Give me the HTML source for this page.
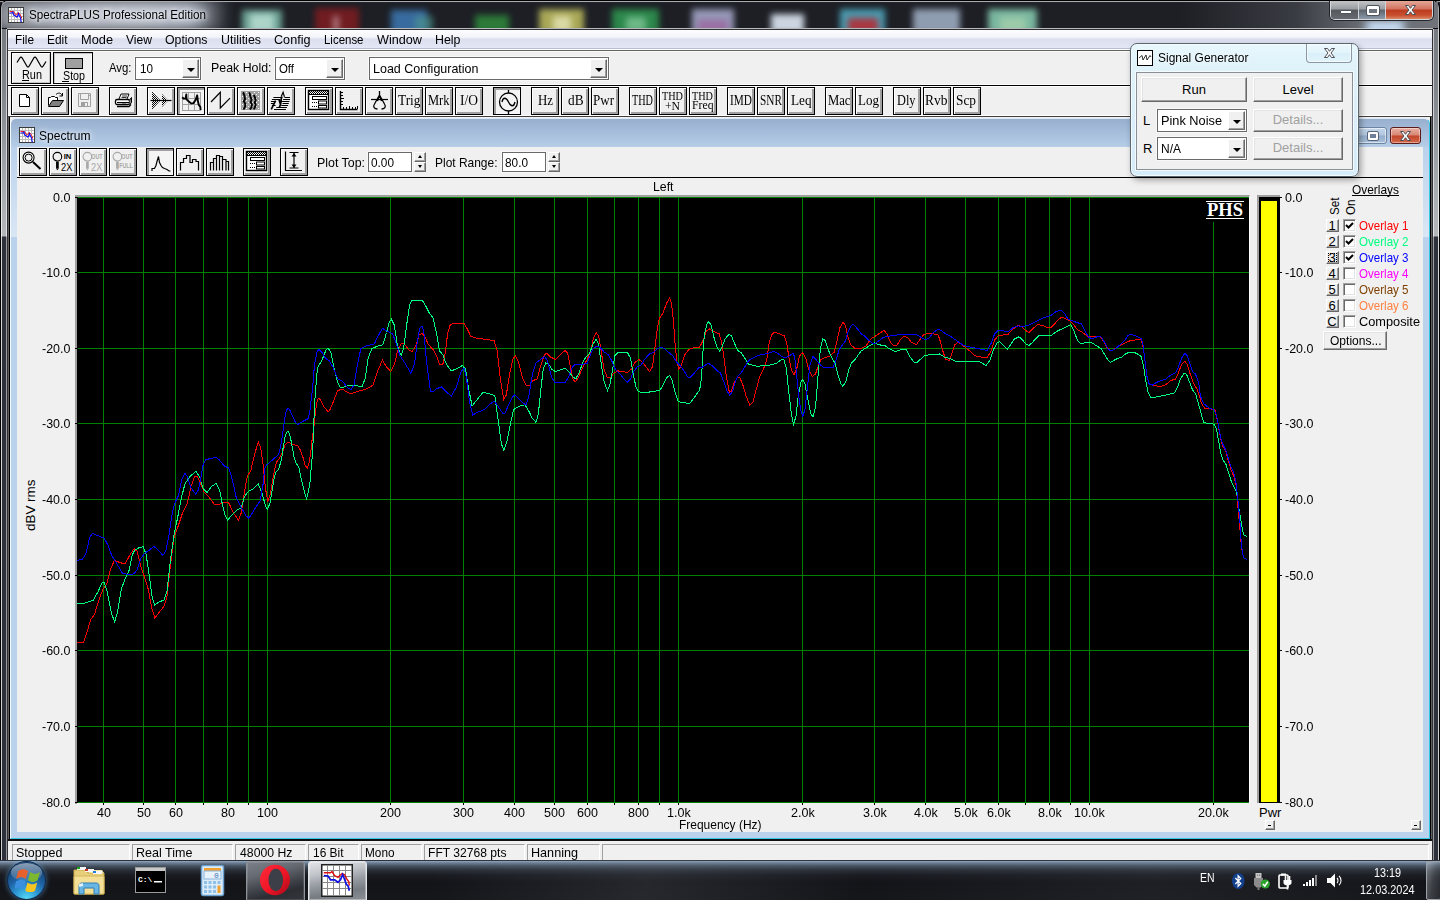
<!DOCTYPE html><html><head><meta charset="utf-8"><title>SpectraPLUS Professional Edition</title><style>
*{box-sizing:border-box}
html,body{margin:0;padding:0}
body{width:1440px;height:900px;position:relative;overflow:hidden;background:#1b1d23;font-family:"Liberation Sans",sans-serif;font-size:12px;color:#000}
.a{position:absolute}
.t{position:absolute;white-space:nowrap;line-height:1}
.btn{position:absolute;background:#f0f0f0;border:1px solid #000;box-shadow:inset 1px 1px 0 #fff,inset -1px -1px 0 #a0a0a0,inset -2px -2px 0 #a0a0a0}
.btn.dn{box-shadow:inset 2px 2px 0 #a0a0a0,inset -1px -1px 0 #f8f8f8;background:#f4f4f4}
.ser{font-family:"Liberation Serif",serif}
.sel{position:absolute;background:#fff;border:1px solid #6a6a6a;box-shadow:0 0 0 1px #f8f8f8}
.arr{position:absolute;background:#f0f0f0;border:1px solid #fff;border-right-color:#696969;border-bottom-color:#696969;box-shadow:inset -1px -1px 0 #a0a0a0}
.arr:after{content:"";position:absolute;left:50%;top:50%;margin:-1px 0 0 -4px;border:4px solid transparent;border-top:4px solid #000;border-bottom:0}
.pb{position:absolute;background:#f0f0f0;border:1px solid #fff;border-right-color:#696969;border-bottom-color:#696969;box-shadow:inset -1px -1px 0 #a0a0a0,inset 1px 1px 0 #e3e3e3;text-align:center;font-size:13px}
</style></head><body><div class="a" id="glass" style="left:0;top:0;width:1440px;height:862px;background:#1d1f25"></div><div class="a" style="left:0;top:2px;width:1440px;height:26px;overflow:hidden"><div class="a" style="left:242px;top:8px;width:40px;height:24px;background:#7fbfae;filter:blur(3px);opacity:0.80"></div><div class="a" style="left:250px;top:12px;width:24px;height:18px;background:#c8ece0;filter:blur(3px);opacity:0.70"></div><div class="a" style="left:315px;top:6px;width:44px;height:26px;background:#7a1c20;filter:blur(3px);opacity:0.90"></div><div class="a" style="left:333px;top:14px;width:6px;height:16px;background:#c8a0a8;filter:blur(3px);opacity:0.70"></div><div class="a" style="left:391px;top:8px;width:36px;height:24px;background:#3f7fbe;filter:blur(3px);opacity:0.80"></div><div class="a" style="left:415px;top:14px;width:18px;height:16px;background:#4f9a8e;filter:blur(3px);opacity:0.60"></div><div class="a" style="left:475px;top:13px;width:34px;height:18px;background:#2f8a3c;filter:blur(3px);opacity:0.85"></div><div class="a" style="left:539px;top:7px;width:45px;height:24px;background:#c2c060;filter:blur(3px);opacity:0.85"></div><div class="a" style="left:553px;top:14px;width:18px;height:16px;background:#e6e6b8;filter:blur(3px);opacity:0.80"></div><div class="a" style="left:612px;top:7px;width:47px;height:24px;background:#2f9a52;filter:blur(3px);opacity:0.85"></div><div class="a" style="left:626px;top:15px;width:20px;height:14px;background:#9adcb0;filter:blur(3px);opacity:0.60"></div><div class="a" style="left:692px;top:7px;width:42px;height:24px;background:#b4b6dc;filter:blur(3px);opacity:0.80"></div><div class="a" style="left:698px;top:18px;width:30px;height:12px;background:#a04890;filter:blur(3px);opacity:0.50"></div><div class="a" style="left:771px;top:12px;width:33px;height:19px;background:#dfe9f4;filter:blur(3px);opacity:0.90"></div><div class="a" style="left:840px;top:7px;width:45px;height:24px;background:#52b0c8;filter:blur(3px);opacity:0.85"></div><div class="a" style="left:848px;top:16px;width:30px;height:15px;background:#c02028;filter:blur(3px);opacity:0.80"></div><div class="a" style="left:913px;top:7px;width:47px;height:24px;background:#a4b4ca;filter:blur(3px);opacity:0.85"></div><div class="a" style="left:988px;top:7px;width:49px;height:24px;background:#8ad2b6;filter:blur(3px);opacity:0.85"></div><div class="a" style="left:1000px;top:15px;width:26px;height:16px;background:#b4d8b0;filter:blur(3px);opacity:0.60"></div></div><div class="a" style="left:0;top:0;width:1440px;height:3px;background:linear-gradient(#000 0,#000 1px,#9a9da2 1px,#9a9da2 2px,#23252c 2px)"></div><div class="a" style="left:0;top:28px;width:1440px;height:1px;background:#0c0d10"></div><div class="a" style="left:0;top:0;width:1440px;height:862px;border:1px solid #000;border-bottom:0;border-radius:8px 8px 0 0"></div><div class="a" style="left:1px;top:1px;width:1438px;height:861px;border:1px solid #a8abb0;border-bottom:0;border-radius:7px 7px 0 0"></div><div class="a" style="left:2px;top:29px;width:4px;height:833px;background:linear-gradient(#777b81 0,#80848a 60px,#a4a7ac 150px,#b4b6ba 207px,#2f313a 208px,#2f313a 100%)"></div><div class="a" style="left:1px;top:29px;width:1px;height:833px;background:linear-gradient(#d0d2d4 0,#ececee 207px,#d8d8dc 208px,#d0d0d4 100%)"></div><div class="a" style="left:6px;top:29px;width:1px;height:833px;background:linear-gradient(#c4c6c8 0,#e4e4e6 207px,#a0a0a4 208px,#98989c 100%)"></div><div class="a" style="left:1434px;top:29px;width:4px;height:833px;background:linear-gradient(#777b81 0,#80848a 60px,#a4a7ac 150px,#b4b6ba 207px,#2f313a 208px,#2f313a 100%)"></div><div class="a" style="left:1433px;top:29px;width:1px;height:833px;background:linear-gradient(#c4c6c8 0,#e4e4e6 207px,#a0a0a4 208px,#98989c 100%)"></div><div class="a" style="left:1438px;top:29px;width:1px;height:833px;background:linear-gradient(#d0d2d4 0,#ececee 207px,#d8d8dc 208px,#d0d0d4 100%)"></div><div class="a" style="left:7px;top:28px;width:1426px;height:1px;background:#b8babd"></div><div class="a" style="left:7px;top:29px;width:1426px;height:833px;background:#f0f0f0;border:1px solid #2e3035"></div><div class="a" style="left:1180px;top:2px;width:258px;height:26px;background:linear-gradient(90deg,rgba(110,114,120,0) 0,rgba(110,114,120,.35) 45%,rgba(112,116,122,.9) 70%,rgba(112,116,122,1) 100%)"></div><div class="a" style="left:1356px;top:19px;width:60px;height:10px;overflow:hidden"><div class="a" style="left:10px;top:2px;width:38px;height:12px;background:#cfe6ff;filter:blur(4px)"></div></div><div class="a" style="left:1329px;top:1px;width:105px;height:20px;border:1px solid #23252a;border-top:0;border-radius:0 0 6px 6px"></div><div class="a" style="left:1330px;top:1px;width:103px;height:19px;border:1px solid #d4d8dc;border-top:0;border-radius:0 0 5px 5px;overflow:hidden"><div class="a" style="left:0;top:0;width:28px;height:18px;background:linear-gradient(#c2c4c6,#9a9da1 45%,#55585d 50%,#66696f);border-right:1px solid #d0d4d8"></div><div class="a" style="left:28px;top:0;width:27px;height:18px;background:linear-gradient(#c2c4c6,#9a9da1 45%,#5c636c 50%,#8b9aab);border-right:1px solid #d0d4d8"></div><div class="a" style="left:55px;top:0;width:47px;height:18px;background:linear-gradient(#e3a898,#d3725e 45%,#bd3a20 50%,#c8502f 80%,#dc8a68)"></div><div class="a" style="left:9px;top:9px;width:12px;height:4px;background:#fff;border:1px solid #50545c;border-radius:1px"></div><div class="a" style="left:36px;top:5px;width:12px;height:9px;border:2px solid #fff;border-top-width:3px;outline:1px solid #50545c;border-radius:1px;background:#6f757e"></div><svg class="a" style="left:73px;top:3px" width="13" height="12" viewBox="0 0 13 12" shape-rendering="auto"><path d="M1.500 1.500h3l2 2.800 2-2.800h3l-3.500 4.500 3.500 4.500h-3l-2-2.800-2 2.800h-3l3.500-4.500z" fill="#fff" stroke="#4a4e58" stroke-width="1"/></svg></div><div class="a" style="left:2px;top:2px;width:260px;height:26px;overflow:hidden"><div class="a" style="left:-8px;top:-3px;width:236px;height:32px;background:linear-gradient(90deg,#8e9298,#b8bcc6 27%,#c4c8d2 62%,#b4bac6 84%,rgba(150,156,168,0) 100%);filter:blur(6px);opacity:.95;border-radius:8px"></div></div><svg class="a" style="left:8px;top:7px" width="16" height="16" viewBox="0 0 16 16"><rect x="0" y="0" width="16" height="16" fill="#fff"/><path d="M3.500 1v14M6.500 1v14M9.500 1v14M12.500 1v14M1 3.500h14M1 6.500h14M1 9.500h14M1 12.500h14" stroke="#bcbcbc" stroke-width="1"/><rect x=".5" y=".5" width="15" height="15" fill="none" stroke="#3a3a3a"/><path d="M1.500 4.500h3.500l1 .5 1 2 1.500 1 1.500-2.500 1 .5 1 1.500 1.500 2.500v1.500" stroke="#f02020" stroke-width="1" fill="none" shape-rendering="auto"/><path d="M1.500 6h3l.5-1.500.5 3.500 1.500.5 1.500 1.500 1-.5 1-3 1 2.500 1 2 .5 3 .5 1" stroke="#1010f0" stroke-width="1.100" fill="none" shape-rendering="auto"/></svg><div class="t" style="left:28.5px;top:8.8px;font-size:12px;font-family:'Liberation Sans',sans-serif;color:#000;font-weight:normal;transform-origin:0 0;transform:scaleX(0.9719);text-shadow:0 0 4px #fff,0 0 7px #e8ecf8,0 0 10px #d8e0f0;">SpectraPLUS Professional Edition</div><div class="a" style="left:8px;top:30px;width:1424px;height:19px;background:linear-gradient(#fdfdfe 0,#f4f5fa 40%,#dcdfee 50%,#e0e4f3 85%,#e3e8f8 100%);border-bottom:1px solid #b8bfd2"></div><div class="a" style="left:8px;top:49px;width:1424px;height:3px;background:linear-gradient(#fff 0,#fff 1px,#646464 1px,#646464 2px,#fafafa 2px)"></div><div class="t" style="left:14.5px;top:34.4px;font-size:12.5px;font-family:'Liberation Sans',sans-serif;color:#000;font-weight:normal;transform-origin:0 0;transform:scaleX(0.9426);">File</div><div class="t" style="left:47.0px;top:34.4px;font-size:12.5px;font-family:'Liberation Sans',sans-serif;color:#000;font-weight:normal;transform-origin:0 0;transform:scaleX(0.9514);">Edit</div><div class="t" style="left:80.5px;top:34.4px;font-size:12.5px;font-family:'Liberation Sans',sans-serif;color:#000;font-weight:normal;transform-origin:0 0;transform:scaleX(1.0230);">Mode</div><div class="t" style="left:125.5px;top:34.4px;font-size:12.5px;font-family:'Liberation Sans',sans-serif;color:#000;font-weight:normal;transform-origin:0 0;transform:scaleX(0.9674);">View</div><div class="t" style="left:165.0px;top:34.4px;font-size:12.5px;font-family:'Liberation Sans',sans-serif;color:#000;font-weight:normal;transform-origin:0 0;transform:scaleX(0.9862);">Options</div><div class="t" style="left:220.5px;top:34.4px;font-size:12.5px;font-family:'Liberation Sans',sans-serif;color:#000;font-weight:normal;transform-origin:0 0;transform:scaleX(0.9926);">Utilities</div><div class="t" style="left:273.5px;top:34.4px;font-size:12.5px;font-family:'Liberation Sans',sans-serif;color:#000;font-weight:normal;transform-origin:0 0;transform:scaleX(1.0099);">Config</div><div class="t" style="left:324.0px;top:34.4px;font-size:12.5px;font-family:'Liberation Sans',sans-serif;color:#000;font-weight:normal;transform-origin:0 0;transform:scaleX(0.9166);">License</div><div class="t" style="left:376.5px;top:34.4px;font-size:12.5px;font-family:'Liberation Sans',sans-serif;color:#000;font-weight:normal;transform-origin:0 0;transform:scaleX(1.0119);">Window</div><div class="t" style="left:434.5px;top:34.4px;font-size:12.5px;font-family:'Liberation Sans',sans-serif;color:#000;font-weight:normal;transform-origin:0 0;transform:scaleX(0.9915);">Help</div><div class="a" style="left:8px;top:52px;width:1424px;height:34px;background:#f0f0f0;border-bottom:1px solid #000;box-shadow:inset 0 -1px 0 #fff"></div><div class="a" style="left:8px;top:86px;width:1424px;height:30px;background:#f0f0f0;border-top:1px solid #fff;border-bottom:1px solid #fff"></div><div class="a" style="left:8px;top:116px;width:1424px;height:2px;background:linear-gradient(#404040 50%,#2a2a2a 50%)"></div><div class="btn" style="left:11px;top:52px;width:40px;height:32px;box-shadow:inset 1px 1px 0 #fff,inset -1px -1px 0 #c8c8c8"></div><svg class="a" style="left:16px;top:55px" width="32" height="14" viewBox="0 0 32 14"><path d="M1 7.500L3.800 3Q5 1 6.200 3L10.800 11Q12 13 13.200 11L17.800 3Q19 1 20.200 3L24.800 11Q26 13 27.200 11L30 6.500" fill="none" stroke="#000" stroke-width="1.250" shape-rendering="auto"/></svg><div class="t" style="left:21.5px;top:68.8px;font-size:12px;font-family:'Liberation Sans',sans-serif;color:#000;font-weight:normal;transform-origin:0 0;transform:scaleX(0.9084);">Run</div><div class="a" style="left:22px;top:80px;width:7px;height:1px;background:#000"></div><div class="btn" style="left:53px;top:52px;width:40px;height:32px;box-shadow:inset 1px 1px 0 #c4c4c4,inset -1px -1px 0 #fff;background:#f2f2f2"></div><div class="a" style="left:65px;top:58px;width:18px;height:11px;background:#a0a0a0;border:1px solid #000"></div><div class="t" style="left:62.5px;top:69.8px;font-size:12px;font-family:'Liberation Sans',sans-serif;color:#000;font-weight:normal;transform-origin:0 0;transform:scaleX(0.8911);">Stop</div><div class="a" style="left:62px;top:81px;width:7px;height:1px;background:#000"></div><div class="t" style="left:108.5px;top:61.0px;font-size:13px;font-family:'Liberation Sans',sans-serif;color:#000;font-weight:normal;transform-origin:0 0;transform:scaleX(0.8727);">Avg:</div><div class="sel" style="left:135px;top:57px;width:66px;height:23px"></div><div class="t" style="left:139.5px;top:62.0px;font-size:13px;font-family:'Liberation Sans',sans-serif;color:#000;font-weight:normal;transform-origin:0 0;transform:scaleX(0.8985);">10</div><div class="arr" style="left:182px;top:59px;width:17px;height:19px"></div><div class="t" style="left:210.5px;top:61.0px;font-size:13px;font-family:'Liberation Sans',sans-serif;color:#000;font-weight:normal;transform-origin:0 0;transform:scaleX(0.9514);">Peak Hold:</div><div class="sel" style="left:275px;top:57px;width:70px;height:23px"></div><div class="t" style="left:279.0px;top:62.0px;font-size:13px;font-family:'Liberation Sans',sans-serif;color:#000;font-weight:normal;transform-origin:0 0;transform:scaleX(0.8767);">Off</div><div class="arr" style="left:326px;top:59px;width:17px;height:19px"></div><div class="sel" style="left:369px;top:57px;width:240px;height:23px"></div><div class="t" style="left:372.5px;top:62.0px;font-size:13px;font-family:'Liberation Sans',sans-serif;color:#000;font-weight:normal;transform-origin:0 0;transform:scaleX(0.9603);">Load Configuration</div><div class="arr" style="left:590px;top:59px;width:17px;height:19px"></div><div class="btn" style="left:11px;top:87px;width:28px;height:28px"></div><svg class="a" style="left:11px;top:87px" width="28" height="28" viewBox="0 0 28 28" ><path d="M8.5 7.5h7l3 3v9h-10z" fill="#fff" stroke="#000"/><path d="M15.5 7.5v3h3" fill="none" stroke="#000"/></svg><div class="btn" style="left:41px;top:87px;width:28px;height:28px"></div><svg class="a" style="left:41px;top:87px" width="28" height="28" viewBox="0 0 28 28" ><path d="M7.5 18.5v-8h2l1-1h3l1 1h2v3" fill="#fff" stroke="#000"/><path d="M7.5 19.5l4-6h11l-4 6z" fill="#808080" stroke="#000"/><path d="M15 7.5c2-2 5-2 6 1M21.5 6v3h-3" fill="none" stroke="#000"/></svg><div class="btn" style="left:71px;top:87px;width:28px;height:28px"></div><svg class="a" style="left:71px;top:87px" width="28" height="28" viewBox="0 0 28 28" ><path d="M7.500 6.500h12v13h-12z" fill="#f0f0f0" stroke="#a0a0a0"/><path d="M9.500 6.500h8v6h-8z" fill="#f0f0f0" stroke="#a0a0a0"/><rect x="10" y="15" width="7" height="5" fill="#a0a0a0"/><rect x="14" y="16" width="2" height="3" fill="#f0f0f0"/><rect x="18" y="8" width="1" height="1" fill="#a0a0a0"/></svg><div class="btn" style="left:109px;top:87px;width:28px;height:28px"></div><svg class="a" style="left:109px;top:87px" width="28" height="28" viewBox="0 0 28 28" ><path d="M10 12l2-5h8l-2 5" fill="#fff" stroke="#000"/><path d="M13 9h5M12.500 10.500h5" stroke="#000" stroke-width=".8"/><rect x="6.500" y="12.500" width="14" height="5" rx="1.500" fill="#fff" stroke="#000" stroke-width="1.300"/><path d="M20.500 13l2-2.500v5l-2 2.500" fill="#808080" stroke="#000"/><path d="M8 19.500h12l2-2" fill="none" stroke="#000" stroke-width="1.300"/><path d="M8 15.500h12" stroke="#000"/><rect x="13" y="16" width="4" height="1" fill="#808080"/></svg><div class="btn" style="left:147px;top:87px;width:28px;height:28px"></div><svg class="a" style="left:147px;top:87px" width="28" height="28" viewBox="0 0 28 28" ><defs><pattern id="chk" width="2" height="2" patternUnits="userSpaceOnUse"><rect width="1" height="1" fill="#000"/><rect x="1" y="1" width="1" height="1" fill="#000"/></pattern></defs><path d="M5 4.500l8.500 9-8.500 9z" fill="url(#chk)"/><path d="M15 7l6 6.500-6 6.500z" fill="url(#chk)"/><path d="M3.500 13.500h21" stroke="#000" stroke-width="1.200"/></svg><div class="btn dn" style="left:177px;top:87px;width:28px;height:28px"></div><svg class="a" style="left:178px;top:88px" width="28" height="28" viewBox="0 0 28 28" ><rect x="4.500" y="4.500" width="18" height="18" fill="#f0f0f0" stroke="#a0a0a0"/><path d="M10.500 5v18M16.500 5v18M5 10.500h18M5 16.500h18" stroke="#a0a0a0" stroke-width="1"/><path d="M4.200 9.200l1.600 1.500 1.800-.3.700-4 .2 5 2.300 2.100 2.500 1.900 2.100-.3 2.200-3.100 1.600-4.700.6 5.300 1 4.400 1.500 1.900.3 3.100" fill="none" stroke="#000" stroke-width="1.900" stroke-linejoin="round" shape-rendering="auto"/></svg><div class="btn" style="left:207px;top:87px;width:28px;height:28px"></div><svg class="a" style="left:207px;top:87px" width="28" height="28" viewBox="0 0 28 28" ><path d="M4 15l9.300-9.700v15.700l9.700-9.800" fill="none" stroke="#000" stroke-width="1.200"/></svg><div class="btn" style="left:237px;top:87px;width:28px;height:28px"></div><svg class="a" style="left:237px;top:87px" width="28" height="28" viewBox="0 0 28 28" ><defs><pattern id="dots" width="4" height="4" patternUnits="userSpaceOnUse"><rect width="4" height="4" fill="#a0a0a0"/><rect x="1" y="1" width="1" height="1" fill="#fff"/><rect x="3" y="3" width="1" height="1" fill="#f0f0f0"/></pattern></defs><rect x="4" y="4" width="19" height="19" fill="url(#dots)"/><path d="M6.100 5.200l1.300 3.400.6 3.800-1.250 1.850 1.550 2.500-.3 3.150-1.600 2.500M12.400 5.200l.9 4.050 1.300 3.450-1 2.200 1.300 2.500-.3 2.500-1.600 2.500M16.750 8l1.250 2.500.6 2.800-.9 1.900.9 2.500-.6 2.500-1.250 2.200" fill="none" stroke="#000" stroke-width="1.900" shape-rendering="auto"/></svg><div class="btn" style="left:267px;top:87px;width:28px;height:28px"></div><svg class="a" style="left:267px;top:87px" width="28" height="28" viewBox="0 0 28 28" ><path d="M6.400 10.500h9.100M17.400 10.500h5.600M4.900 12.500h8.700M16.100 12.500h6.900M3.900 14.500h4.700M13.600 14.500h8.800M3.900 16.500h4.100M15.500 16.500h6.250M4.900 18.500h3.700M14.250 18.500h6.850M9.250 20.500h10.650M7 22.500h11.900" stroke="#000" stroke-width="1.200"/><path d="M14.250 9.500l1.850-4.300 1.300 4.700" fill="none" stroke="#000" stroke-width="1.200" shape-rendering="auto"/><path d="M8.600 13.600l-4.350 8.800M12 12.500l1.500 5-1.200 3M14.600 9.500l-1 8" fill="none" stroke="#000" stroke-width="1.700" shape-rendering="auto"/></svg><div class="btn" style="left:305px;top:87px;width:28px;height:28px"></div><svg class="a" style="left:305px;top:87px" width="28" height="28" viewBox="0 0 28 28" ><rect x="3.500" y="3.500" width="20" height="19" fill="#fff" stroke="#000" stroke-width="1.400"/><rect x="4" y="4" width="19" height="3" fill="url(#chk)"/><path d="M4 7.500h19" stroke="#000"/><rect x="7.500" y="9.500" width="14" height="3" fill="#fff" stroke="#000"/><rect x="13.500" y="14" width="8" height="3" fill="#fff" stroke="#000"/><rect x="13.500" y="18.500" width="8" height="2.500" fill="#fff" stroke="#000"/><path d="M7 15.500h5M7 19.500h5" stroke="#000" stroke-dasharray="1 1"/></svg><div class="btn" style="left:335px;top:87px;width:28px;height:28px"></div><svg class="a" style="left:335px;top:87px" width="28" height="28" viewBox="0 0 28 28" ><path d="M5.500 4v18.500h17" fill="none" stroke="#000" stroke-width="1.400"/><path d="M6 5.500h2M6 8.500h2M6 11.500h3M6 14.500h2M6 17.500h2M8.500 22v-2M11.500 22v-2M14.500 22v-3M17.500 22v-2M20.500 22v-2M22.500 22v-3" stroke="#000"/></svg><div class="btn" style="left:365px;top:87px;width:28px;height:28px"></div><svg class="a" style="left:365px;top:87px" width="28" height="28" viewBox="0 0 28 28" ><path d="M6 12.500h17" stroke="#000" stroke-width="1.200"/><path d="M14.500 4v4l-5 9c-2 3 0 5 3 5M14.500 8l5 9c2 3 0 5-3 5M14.500 8l-2 6M14.500 8l2 6" fill="none" stroke="#000" stroke-width="1.300"/></svg><div class="btn" style="left:395px;top:87px;width:28px;height:28px"></div><div class="btn" style="left:425px;top:87px;width:28px;height:28px"></div><div class="btn" style="left:455px;top:87px;width:28px;height:28px"></div><div class="btn dn" style="left:493px;top:87px;width:28px;height:28px"></div><svg class="a" style="left:494px;top:88px" width="28" height="28" viewBox="0 0 28 28" ><circle cx="14.500" cy="14" r="9" fill="none" stroke="#000" stroke-width="1.300"/><path d="M14.500 2v3M14.500 23v3" stroke="#000" stroke-width="1.300"/><path d="M8 14c1-5 4-5 6.500 0s5.500 5 6.500 0" fill="none" stroke="#000" stroke-width="1.300"/></svg><div class="btn" style="left:531px;top:87px;width:28px;height:28px"></div><div class="btn" style="left:561px;top:87px;width:28px;height:28px"></div><div class="btn" style="left:591px;top:87px;width:28px;height:28px"></div><div class="btn" style="left:629px;top:87px;width:28px;height:28px"></div><div class="btn" style="left:659px;top:87px;width:28px;height:28px"></div><div class="btn" style="left:689px;top:87px;width:28px;height:28px"></div><div class="btn" style="left:727px;top:87px;width:28px;height:28px"></div><div class="btn" style="left:757px;top:87px;width:28px;height:28px"></div><div class="btn" style="left:787px;top:87px;width:28px;height:28px"></div><div class="btn" style="left:825px;top:87px;width:28px;height:28px"></div><div class="btn" style="left:855px;top:87px;width:28px;height:28px"></div><div class="btn" style="left:893px;top:87px;width:28px;height:28px"></div><div class="btn" style="left:923px;top:87px;width:28px;height:28px"></div><div class="btn" style="left:953px;top:87px;width:28px;height:28px"></div><div class="t" style="left:397.5px;top:94.3px;font-size:14px;font-family:'Liberation Serif',serif;color:#000;font-weight:normal;transform-origin:0 0;transform:scaleX(0.9524);">Trig</div><div class="t" style="left:427.5px;top:94.3px;font-size:14px;font-family:'Liberation Serif',serif;color:#000;font-weight:normal;transform-origin:0 0;transform:scaleX(0.8912);">Mrk</div><div class="t" style="left:460.0px;top:94.3px;font-size:14px;font-family:'Liberation Serif',serif;color:#000;font-weight:normal;transform-origin:0 0;transform:scaleX(0.9640);">I/O</div><div class="t" style="left:537.5px;top:94.3px;font-size:14px;font-family:'Liberation Serif',serif;color:#000;font-weight:normal;transform-origin:0 0;transform:scaleX(0.9187);">Hz</div><div class="t" style="left:567.5px;top:94.3px;font-size:14px;font-family:'Liberation Serif',serif;color:#000;font-weight:normal;transform-origin:0 0;transform:scaleX(0.9484);">dB</div><div class="t" style="left:593.0px;top:94.3px;font-size:14px;font-family:'Liberation Serif',serif;color:#000;font-weight:normal;transform-origin:0 0;transform:scaleX(0.9307);">Pwr</div><div class="t" style="left:631.5px;top:94.3px;font-size:14px;font-family:'Liberation Serif',serif;color:#000;font-weight:normal;transform-origin:0 0;transform:scaleX(0.7296);">THD</div><div class="t" style="left:729.5px;top:94.3px;font-size:14px;font-family:'Liberation Serif',serif;color:#000;font-weight:normal;transform-origin:0 0;transform:scaleX(0.8078);">IMD</div><div class="t" style="left:759.5px;top:94.3px;font-size:14px;font-family:'Liberation Serif',serif;color:#000;font-weight:normal;transform-origin:0 0;transform:scaleX(0.8078);">SNR</div><div class="t" style="left:790.5px;top:94.3px;font-size:14px;font-family:'Liberation Serif',serif;color:#000;font-weight:normal;transform-origin:0 0;transform:scaleX(0.9419);">Leq</div><div class="t" style="left:827.5px;top:94.3px;font-size:14px;font-family:'Liberation Serif',serif;color:#000;font-weight:normal;transform-origin:0 0;transform:scaleX(0.9040);">Mac</div><div class="t" style="left:858.0px;top:94.3px;font-size:14px;font-family:'Liberation Serif',serif;color:#000;font-weight:normal;transform-origin:0 0;transform:scaleX(0.9307);">Log</div><div class="t" style="left:897.0px;top:94.3px;font-size:14px;font-family:'Liberation Serif',serif;color:#000;font-weight:normal;transform-origin:0 0;transform:scaleX(0.8810);">Dly</div><div class="t" style="left:925.0px;top:94.3px;font-size:14px;font-family:'Liberation Serif',serif;color:#000;font-weight:normal;transform-origin:0 0;transform:scaleX(0.9639);">Rvb</div><div class="t" style="left:955.5px;top:94.3px;font-size:14px;font-family:'Liberation Serif',serif;color:#000;font-weight:normal;transform-origin:0 0;transform:scaleX(0.9524);">Scp</div><div class="t" style="left:662.0px;top:89.5px;font-size:12px;font-family:'Liberation Serif',serif;color:#000;font-weight:normal;transform-origin:0 0;transform:scaleX(0.8512);">THD</div><div class="t" style="left:665.0px;top:99.5px;font-size:12px;font-family:'Liberation Serif',serif;color:#000;font-weight:normal;transform-origin:0 0;transform:scaleX(0.9717);">+N</div><div class="t" style="left:692.0px;top:89.5px;font-size:12px;font-family:'Liberation Serif',serif;color:#000;font-weight:normal;transform-origin:0 0;transform:scaleX(0.8512);">THD</div><div class="t" style="left:692.0px;top:98.5px;font-size:12px;font-family:'Liberation Serif',serif;color:#000;font-weight:normal;transform-origin:0 0;transform:scaleX(0.9773);">Freq</div><div class="a" style="left:8px;top:117px;width:1424px;height:724px;background:#f0f0f0"></div><div class="a" style="left:8px;top:117px;width:2px;height:724px;background:linear-gradient(90deg,#606060 50%,#000 50%)"></div><div class="a" style="left:1430px;top:117px;width:2px;height:724px;background:linear-gradient(90deg,#000 50%,#606060 50%)"></div><div class="a" style="left:10px;top:118px;width:1420px;height:721px;background:linear-gradient(#98b0cf 0,#b4cbe6 26px,#bbd2ec 30px,#bbd2ec 100%);border-radius:6px 6px 0 0;border:1px solid #f4f9ff;border-right:1px solid #35c8e8;border-bottom:1px solid #35c8e8;border-top:1px solid #dfe9f5"></div><div class="a" style="left:8px;top:839px;width:1424px;height:2px;background:#111"></div><div class="a" style="left:8px;top:841px;width:1424px;height:1px;background:#fff"></div><svg class="a" style="left:19px;top:127px" width="16" height="16" viewBox="0 0 16 16"><rect x="0" y="0" width="16" height="16" fill="#fff"/><path d="M3.500 1v14M6.500 1v14M9.500 1v14M12.500 1v14M1 3.500h14M1 6.500h14M1 9.500h14M1 12.500h14" stroke="#bcbcbc" stroke-width="1"/><rect x=".5" y=".5" width="15" height="15" fill="none" stroke="#3a3a3a"/><path d="M1.500 4.500h3.500l1 .5 1 2 1.500 1 1.500-2.500 1 .5 1 1.500 1.500 2.500v1.500" stroke="#f02020" stroke-width="1" fill="none" shape-rendering="auto"/><path d="M1.500 6h3l.5-1.500.5 3.500 1.500.5 1.500 1.500 1-.5 1-3 1 2.500 1 2 .5 3 .5 1" stroke="#1010f0" stroke-width="1.100" fill="none" shape-rendering="auto"/></svg><div class="t" style="left:38.5px;top:130.4px;font-size:12.5px;font-family:'Liberation Sans',sans-serif;color:#000;font-weight:normal;transform-origin:0 0;transform:scaleX(0.9626);text-shadow:0 0 5px #fff,0 0 8px #dfeaf8;">Spectrum</div><div class="a" style="left:1336px;top:127px;width:51px;height:17px;border:1px solid #6d84a2;border-radius:3px;background:linear-gradient(#c5d6ea,#b1c6de 48%,#93adca 52%,#a9c0da);box-shadow:inset 0 0 0 1px rgba(255,255,255,.55)"></div><div class="a" style="left:1368px;top:132px;width:10px;height:8px;border:2px solid #fff;outline:1px solid #59667a;background:#6d7f99;border-radius:1px"></div><div class="a" style="left:1390px;top:127px;width:31px;height:17px;border:1px solid #5c1a1a;border-radius:3px;background:linear-gradient(#e8b0a4,#d88672 48%,#c1452b 52%,#d4694a);box-shadow:inset 0 0 0 1px rgba(255,255,255,.4)"></div><svg class="a" style="left:1399px;top:130px" width="13" height="12" viewBox="0 0 13 12" shape-rendering="auto"><path d="M1.500 1.500h3l2 2.800 2-2.800h3l-3.500 4.500 3.500 4.500h-3l-2-2.800-2 2.800h-3l3.500-4.500z" fill="#fff" stroke="#4a4e58" stroke-width="1"/></svg><div class="a" style="left:11px;top:147px;width:6px;height:90px;background:linear-gradient(rgba(255,255,255,0),rgba(255,255,255,.45))"></div><div class="a" style="left:1423px;top:147px;width:6px;height:90px;background:linear-gradient(rgba(255,255,255,0),rgba(255,255,255,.45))"></div><div class="a" style="left:17px;top:147px;width:1406px;height:685px;background:#f0f0f0"></div><div class="a" style="left:17px;top:177px;width:1406px;height:1px;background:#000"></div><div class="btn" style="left:19px;top:148px;width:28px;height:28px"></div><svg class="a" style="left:19px;top:148px" width="28" height="28" viewBox="0 0 28 28" ><circle cx="9.600" cy="9.600" r="5.500" fill="none" stroke="#000" stroke-width="1.100"/><circle cx="9.600" cy="9.600" r="3.500" fill="none" stroke="#000" stroke-width="1"/><path d="M14 14l7.500 7" stroke="#000" stroke-width="2"/></svg><div class="btn" style="left:49px;top:148px;width:28px;height:28px"></div><svg class="a" style="left:49px;top:148px" width="28" height="28" viewBox="0 0 28 28" ><circle cx="8.400" cy="8.700" r="4.300" fill="none" stroke="#000" stroke-width="1.100"/><path d="M8.400 13.500v7" stroke="#000" stroke-width="2.700"/><path d="M7 20.500l1.400 1.800 1.400-1.800z" fill="#000"/><text x="14.7" y="10.600" font-family="Liberation Sans, sans-serif" font-size="6.500" font-weight="bold" fill="#000" textLength="7.7" lengthAdjust="spacingAndGlyphs">IN</text><text x="12" y="22.700" font-family="Liberation Sans, sans-serif" font-size="11.300" fill="#000" textLength="11.300" lengthAdjust="spacingAndGlyphs">2X</text></svg><div class="btn" style="left:79px;top:148px;width:28px;height:28px"></div><svg class="a" style="left:79px;top:148px" width="28" height="28" viewBox="0 0 28 28" ><circle cx="8.400" cy="8.700" r="4.300" fill="none" stroke="#a8a8a8" stroke-width="1.100"/><path d="M8.400 13.500v7" stroke="#a8a8a8" stroke-width="2.700"/><path d="M7 20.500l1.400 1.800 1.400-1.800z" fill="#a8a8a8"/><text x="12.3" y="10.600" font-family="Liberation Sans, sans-serif" font-size="6.500" font-weight="bold" fill="#a8a8a8" textLength="11.2" lengthAdjust="spacingAndGlyphs">OUT</text><text x="12" y="22.700" font-family="Liberation Sans, sans-serif" font-size="11.300" fill="#a8a8a8" textLength="11.300" lengthAdjust="spacingAndGlyphs">2X</text></svg><div class="btn" style="left:109px;top:148px;width:28px;height:28px"></div><svg class="a" style="left:109px;top:148px" width="28" height="28" viewBox="0 0 28 28" ><circle cx="8.400" cy="8.700" r="4.300" fill="none" stroke="#a8a8a8" stroke-width="1.100"/><path d="M8.400 13.500v7" stroke="#a8a8a8" stroke-width="2.700"/><path d="M7 20.500l1.400 1.800 1.400-1.800z" fill="#a8a8a8"/><text x="12.3" y="10.600" font-family="Liberation Sans, sans-serif" font-size="6.500" font-weight="bold" fill="#a8a8a8" textLength="11.2" lengthAdjust="spacingAndGlyphs">OUT</text><text x="10.200" y="20" font-family="Liberation Sans, sans-serif" font-size="6.500" font-weight="bold" fill="#a8a8a8" textLength="13.600" lengthAdjust="spacingAndGlyphs">FULL</text></svg><div class="btn dn" style="left:146px;top:148px;width:28px;height:28px"></div><svg class="a" style="left:147px;top:149px" width="28" height="28" viewBox="0 0 28 28" ><path d="M5 22v-2.500h2.500l1.500-3 1-4 1.500-5 1 6 1.500 3 1.500 2 2 1 2.500 1 2 1.500h1.500" fill="none" stroke="#000" stroke-width="1.200"/></svg><div class="btn" style="left:176px;top:148px;width:28px;height:28px"></div><svg class="a" style="left:176px;top:148px" width="28" height="28" viewBox="0 0 28 28" ><path d="M4.500 22.500v-8h3v-4h3v-3h3.500v7h2.500v-3h3.500v2h2.500v9" fill="none" stroke="#000" stroke-width="1.200"/></svg><div class="btn" style="left:206px;top:148px;width:28px;height:28px"></div><svg class="a" style="left:206px;top:148px" width="28" height="28" viewBox="0 0 28 28" ><path d="M4.500 22.500v-8h3v8M7.500 14.500v-4h3v12M10.500 10.500v-3h3v15M13.500 8.500h3v14M16.500 11.500h3.500v11M20 13.500h2.500v9" fill="none" stroke="#000" stroke-width="1.200"/></svg><div class="btn" style="left:243px;top:148px;width:28px;height:28px"></div><svg class="a" style="left:243px;top:148px" width="28" height="28" viewBox="0 0 28 28" ><rect x="3.500" y="3.500" width="20" height="19" fill="#fff" stroke="#000" stroke-width="1.400"/><rect x="4" y="4" width="19" height="3" fill="url(#chk)"/><path d="M4 7.500h19" stroke="#000"/><rect x="7.500" y="9.500" width="14" height="3" fill="#fff" stroke="#000"/><rect x="13.500" y="14" width="8" height="3" fill="#fff" stroke="#000"/><rect x="13.500" y="18.500" width="8" height="2.500" fill="#fff" stroke="#000"/><path d="M7 15.500h5M7 19.500h5" stroke="#000" stroke-dasharray="1 1"/></svg><div class="btn" style="left:280px;top:148px;width:28px;height:28px"></div><svg class="a" style="left:280px;top:148px" width="28" height="28" viewBox="0 0 28 28" ><path d="M5.500 3.500v19h16.500" fill="none" stroke="#000" stroke-width="1.200"/><path d="M9.500 4.500h9M9.500 20h9M14 5v14.500" stroke="#000" stroke-width="1.200"/><path d="M11.500 8.500l2.500-3.500 2.500 3.500zM11.500 16.500l2.500 3.500 2.500-3.500z" fill="#000"/></svg><div class="t" style="left:317.0px;top:156.0px;font-size:13px;font-family:'Liberation Sans',sans-serif;color:#000;font-weight:normal;transform-origin:0 0;transform:scaleX(0.9531);">Plot Top:</div><div class="sel" style="left:368px;top:152px;width:44px;height:20px"></div><div class="t" style="left:370.5px;top:156.0px;font-size:13px;font-family:'Liberation Sans',sans-serif;color:#000;font-weight:normal;transform-origin:0 0;transform:scaleX(0.9086);">0.00</div><div class="a" style="left:414px;top:152px;width:12px;height:10px;background:#f0f0f0;border:1px solid #fff;border-right-color:#696969;border-bottom-color:#696969;box-shadow:inset -1px -1px 0 #a0a0a0"></div><div class="a" style="left:417.5px;top:155px;border:2.5px solid transparent;border-bottom:3px solid #000;border-top:0"></div><div class="a" style="left:414px;top:162px;width:12px;height:10px;background:#f0f0f0;border:1px solid #fff;border-right-color:#696969;border-bottom-color:#696969;box-shadow:inset -1px -1px 0 #a0a0a0"></div><div class="a" style="left:417.5px;top:165px;border:2.5px solid transparent;border-top:3px solid #000;border-bottom:0"></div><div class="t" style="left:435.0px;top:156.0px;font-size:13px;font-family:'Liberation Sans',sans-serif;color:#000;font-weight:normal;transform-origin:0 0;transform:scaleX(0.9200);">Plot Range:</div><div class="sel" style="left:502px;top:152px;width:44px;height:20px"></div><div class="t" style="left:504.5px;top:156.0px;font-size:13px;font-family:'Liberation Sans',sans-serif;color:#000;font-weight:normal;transform-origin:0 0;transform:scaleX(0.9086);">80.0</div><div class="a" style="left:548px;top:152px;width:12px;height:10px;background:#f0f0f0;border:1px solid #fff;border-right-color:#696969;border-bottom-color:#696969;box-shadow:inset -1px -1px 0 #a0a0a0"></div><div class="a" style="left:551.5px;top:155px;border:2.5px solid transparent;border-bottom:3px solid #000;border-top:0"></div><div class="a" style="left:548px;top:162px;width:12px;height:10px;background:#f0f0f0;border:1px solid #fff;border-right-color:#696969;border-bottom-color:#696969;box-shadow:inset -1px -1px 0 #a0a0a0"></div><div class="a" style="left:551.5px;top:165px;border:2.5px solid transparent;border-top:3px solid #000;border-bottom:0"></div><div class="t" style="left:653.0px;top:180.0px;font-size:13px;font-family:'Liberation Sans',sans-serif;color:#000;font-weight:normal;transform-origin:0 0;transform:scaleX(0.9452);">Left</div><div class="a" style="left:75px;top:195px;width:1175px;height:609px;background:#000;border-left:2px solid #a0a0a0;border-top:2px solid #a0a0a0;border-right:1px solid #fff;border-bottom:0"></div><svg class="a" style="left:77px;top:197px" width="1172" height="609" viewBox="77 197 1172 609" shape-rendering="crispEdges"><rect x="77" y="197" width="1172" height="606" fill="#000"/><path d="M103.5 197V803M143.5 197V803M175.5 197V803M203.5 197V803M227.5 197V803M248.5 197V803M267.5 197V803M390.5 197V803M463.5 197V803M514.5 197V803M554.5 197V803M587.5 197V803M614.5 197V803M638.5 197V803M659.5 197V803M678.5 197V803M802.5 197V803M874.5 197V803M925.5 197V803M965.5 197V803M998.5 197V803M1025.5 197V803M1049.5 197V803M1070.5 197V803M1089.5 197V803M1213.5 197V803M77 197.5H1249M77 272.5H1249M77 348.5H1249M77 423.5H1249M77 499.5H1249M77 575.5H1249M77 650.5H1249M77 726.5H1249M77 802.5H1249" stroke="#008000" stroke-width="1" fill="none"/><path d="M103.5 803v2M143.5 803v2M175.5 803v2M203.5 803v2M227.5 803v2M248.5 803v2M267.5 803v2M390.5 803v2M463.5 803v2M514.5 803v2M554.5 803v2M587.5 803v2M614.5 803v2M638.5 803v2M659.5 803v2M678.5 803v2M802.5 803v2M874.5 803v2M925.5 803v2M965.5 803v2M998.5 803v2M1025.5 803v2M1049.5 803v2M1070.5 803v2M1089.5 803v2M1213.5 803v2" stroke="#000" stroke-width="1" fill="none"/><rect x="1205" y="198" width="44" height="24" fill="#000"/><path d="M1206 201.500h38M1206 218.500h38" stroke="#fff" stroke-width="1"/><text x="1207" y="216" font-family="Liberation Serif, serif" font-weight="bold" font-size="18" fill="#fff" textLength="36" lengthAdjust="spacingAndGlyphs">PHS</text><polyline points="76.8,642.3 83.4,642.3 85.9,635.5 90.8,619.6 94.4,614.7 99.3,598.8 103,589.1 106.7,584.2 110.3,569.5 114.5,560.2 118.9,562.2 125,564.1 129.9,554.9 134,548.7 137.2,551.2 140.9,567.1 144.5,576.9 148.2,589.1 151.9,608.6 154.8,617.9 159.2,612.3 164.1,606.2 167,596.4 170.2,567.1 173.9,537.8 177.5,528 182.4,513.3 187.3,503.5 191,486.4 194.6,476.7 197.1,476.2 200.7,484 204.4,492.5 209.3,497.4 214.2,504 219.1,504.3 225.2,502.3 228.8,503 233.7,513.3 238.6,520.2 241.1,513.3 244,495 247.2,476.7 250.8,470.5 254.5,454.7 258.2,442 260.6,447.3 263.1,464.4 265.5,488.9 267.9,501.1 270.4,493.8 273.1,477.8 274.8,468.9 276.4,462.2 279.8,457.8 282.6,452.2 284.8,445.6 287,442.8 289.2,442.4 292,443.9 295.3,445 297.6,445.6 300.3,450 303.1,457.8 305.3,465.6 307.3,468.3 309.2,462.2 310.9,451.1 311.8,442.2 312.6,435.6 314.2,424.4 315.3,413.3 316.4,404.4 317.6,399.4 318.7,398.3 320.9,400.6 324.2,407.2 328.1,411.7 329.8,410 332,405 337.7,390.5 342.5,389.2 347.4,392.4 351.1,393.6 358.4,391.2 365.8,389.2 373.1,385.1 378,370.4 382.4,360.2 386.5,366.8 390.7,371.6 394.6,364.3 397.5,350.9 401.2,343.5 404.4,344 408.5,349.6 412.2,351.4 415.9,346 419,335 422,333.3 424.4,335.7 428.1,344 433,349.6 436.6,355.8 439.6,364.3 442.7,365 445.2,353.3 447.6,333.8 450.1,325.2 452.5,323.5 464,323.5 467.2,328.9 470.8,336.2 475.7,337.9 485.5,339.4 494.1,340.6 497.2,350.9 500.2,377.8 503.8,399.3 506.3,394.9 509.9,372.9 512.9,359.4 515.3,355.3 518.5,361.9 522.4,377.8 526.1,385.1 529.8,385.1 532.7,380.7 537.1,379 540.8,365.5 544.4,354.5 546.9,353.3 550.5,357 555.4,359.4 560.3,354.5 565.2,350.4 567.7,353.3 570.1,365.5 572.5,377.8 575,382.2 578.2,377.8 582.3,368 587.2,359.4 590.9,350.9 593.3,338.7 596.2,332.5 598.7,336.2 601.1,350.9 604.3,370.4 607.5,377.8 610.4,377.8 614.1,372.9 617.8,370.9 622.6,371.6 627.5,372.4 631.2,369.2 634.9,362.6 638.5,359.4 642.2,361.9 645.9,366.8 649.5,371.6 652.5,366.8 654.9,348.4 657.3,328.9 659.3,318.6 663,313 666.6,303.2 669.6,298.3 671.5,303.2 673.5,321.5 675.2,346 677.1,363.1 678.8,369.2 681.3,365.5 685,354.5 688.6,349.6 693.5,347.9 699.6,347.2 703.3,339.9 706.2,331.3 709.4,328.9 714.3,331.8 719.2,333.8 721.6,342.3 724.1,358.2 726.5,377.8 729.4,392.4 731.4,391.2 733.8,383.9 737,377.8 739.9,377.8 742.9,385.1 746.1,396.1 749.7,405.1 752.9,402.2 756.1,390 759.8,376.5 763.4,369.2 766.6,360.6 769.1,343.5 771.5,335 774.4,332.1 779.3,333.8 784.2,335.7 786.7,343.5 789.1,358.2 791.5,370.4 794,374.8 796.9,368 799.6,355.8 802.5,352.6 805.7,358.2 808.7,369.2 812.3,376.5 815.5,374.1 818.4,365.5 820.9,359.4 824.5,357.7 829.4,356.5 834.3,352.1 837.5,338.7 839.9,327.7 842.9,322.3 845.3,325.2 847.8,336.2 850.7,344.8 855.1,348.4 861.2,348.4 866.1,346 871,338.7 875.9,335.7 880.7,332.5 883.9,330.1 886.9,333.8 890.5,342.3 894.2,346 896.6,345.5 900.3,339.9 904,336.2 907.6,337.4 911.3,342.3 916.2,344.8 919.8,339.9 923.5,335 928.4,333.3 933.3,333.8 938.2,335 940.6,342.3 943.5,353.3 946,359.4 949.2,360.2 951.6,354.5 954.8,344.8 957.7,342.3 961.4,344 966.3,348.4 971.2,352.1 974.8,355.8 980.9,357 987.3,357.7 991,350.9 994.7,339.9 998.3,335.7 1003.2,335 1008.1,334.3 1013,328.9 1017.9,325.7 1021.5,326.4 1025.2,330.1 1028.9,332.5 1032.5,328.9 1037.4,324.7 1042.3,325.2 1047.2,327.7 1050.9,327.7 1054.5,324 1058.2,319.6 1061.9,317.1 1065.5,318.6 1070.4,321.1 1074.1,325.2 1077.8,330.1 1082.6,332.5 1087.5,336.2 1092.4,336.7 1099.7,336.2 1103.4,341.1 1107.1,347.9 1110.7,350.9 1114.4,349.2 1119.3,345.5 1124.2,343.5 1129.1,341.1 1135.2,339.9 1141.3,339.9 1143.2,347.2 1145,360.6 1146.7,375.3 1149.1,383.9 1153.5,385.6 1160.8,386.5 1165.7,384.6 1170.6,380.7 1175.5,379 1178.4,372.9 1181.6,364.3 1184.8,361.1 1187.2,364.3 1190.2,374.1 1193.8,383.9 1197.5,390 1201.6,403.7 1204.8,408.3 1210,408.6 1214.9,410 1216.4,416.4 1218.5,426.9 1220.6,438.5 1222.7,445.9 1225.8,451.1 1228,459.6 1231.1,470.1 1234.3,477.5 1236,484.9 1237.4,499.6 1238.5,514.4 1239.8,527 1240.6,537.6 1241.7,548.1 1242.7,554.5" fill="none" stroke="#ff0000" stroke-width="1" shape-rendering="crispEdges"/><polyline points="76.8,603.2 84.7,603.2 93.2,600.1 98.1,591.5 101.8,583 104.2,582.2 107.1,591.5 111.5,613.5 114.7,622.1 117.7,611.1 121.3,589.1 125,579.3 128.7,572 132.3,554.9 134.8,550 139.6,547.5 143.3,546.8 146.2,554.9 149.4,576.9 152.4,598.8 154.8,605 159.2,601.8 164.1,600.1 167,591.5 170.2,562.2 173.9,535.3 177.5,518.2 181.2,498.7 184.9,484 189.7,476.7 195.9,471.3 199.5,476.7 203.2,488.9 206.9,492.5 211.7,486.4 216.1,483.5 219.6,490.1 222.7,506 225.2,515.8 227.6,519.9 232.5,514.5 237.4,509.6 241.1,507.9 244.7,496.2 248.4,491.3 253.3,488.9 258.2,484 261.8,492.5 265.5,506 267.5,509.2 269.9,503.5 272.8,486.4 273.7,480 275.9,472.2 278.7,468.9 281.4,460 283.1,447.8 285.3,435.6 287,431.7 288.7,431.7 290.3,436.7 292,445.6 294.2,457.8 295.9,462.8 299.2,468.3 301.4,480 303.4,487.7 306.6,499.5 309,487.7 310.3,480 310.9,471.1 312.6,453.3 313.3,435.6 314.2,413.3 315.1,396.7 316.4,380 317.4,368 321.8,360.6 326.2,349.6 328.4,348.4 331.1,353.3 334,368 337.7,382.6 340.1,387.5 345,386.8 349.9,385.1 356,385.6 362.1,387 365.3,377.8 368.2,358.2 371.9,348.4 378,346 382.9,344.8 386.5,332.5 389,322.8 391.4,319.1 394.3,325.2 397.5,346 401.2,355.8 403.6,348.4 406.8,324 409.7,304.4 411.5,300.8 422.5,300.8 425.6,305.7 429.3,313 433,317.9 436.1,331.3 439.6,350.9 442.7,354.5 446.4,364.3 451.3,370.9 457.4,368.5 462.3,365.5 465.5,369.2 468.4,387.5 472.1,405.9 477,399.7 483.1,392.4 489.2,393.6 494.8,395.6 497.7,416.9 501.4,443.7 503.8,450.6 507,441.3 509.9,426.6 513.6,409.5 518.5,406.6 524.9,404.6 528.6,410.7 532.2,418.1 535.9,422.2 538.3,414.4 540.8,390 543.2,369.2 545.7,363.1 548.8,364.3 551.8,369.2 555.4,371.6 560.3,369.9 565.2,368.5 568.9,371.6 572.5,376.5 575.7,379 579.1,372.9 583,361.9 586,357 589.6,353.3 593.3,343.5 596.2,339.4 598.7,344.8 601.1,363.1 604.3,382.6 607.5,390.5 609.9,385.1 612.4,370.4 614.8,355.8 617.8,352.6 627.5,352.6 630.5,358.2 632.9,372.9 636.1,387.5 638.5,391.9 647.1,392.4 654.4,391.2 659.8,390.5 663,385.1 666.6,377.8 669.6,375.3 672,380.2 675.2,392.4 678.4,401.7 685,402.9 689.8,403.4 694.7,396.8 699.6,390 701.6,377.8 702.8,353.3 704.5,333.8 707,324 708.7,321.5 711.1,325.2 714.3,338.7 717.5,348.4 719.9,351.4 722.3,346 725.3,338.7 728.9,334.3 731.4,335.7 734.6,343.5 737.5,350.4 741.2,352.8 744.8,358.2 748.5,364.3 757.3,366.3 764.7,365.5 772,364.8 776.9,363.1 780.5,360.2 783.7,359.4 786.2,368 788.6,390 791.1,412 793.5,424.2 795.9,416.9 798.4,394.9 800.8,382.6 802.5,379.7 805,383.9 807.4,397.3 810.6,413.2 813,416.9 815.5,407.1 817.9,377.8 820.4,348.4 822.8,338.7 825.3,340.6 828.2,349.6 831.9,358.2 835,363.1 838,375.3 840.9,383.9 842.9,386.3 845.8,381.4 849,369.2 851.4,363.1 855.1,359.4 861.2,350.9 867.3,347.2 874.6,343 879.5,344.8 885.6,346 890.5,349.6 895.4,351.4 901.5,349.6 906.4,349.6 910.1,357 913.7,361.9 916.7,362.6 921.1,358.7 924.7,355.3 933.3,354.5 939.4,354 944.3,357 949.2,358.2 955.3,361.1 965.1,361.9 972.4,361.4 979.7,361.9 986.1,365.5 989.8,360.6 993.4,349.6 997.1,343 999.6,341.6 1003.2,345.5 1007.4,349.2 1010.5,344.8 1014.2,339.1 1018.6,336.9 1021.5,338.7 1025.2,343.5 1028.9,345.5 1032.5,342.3 1038.7,335.7 1050.9,335.7 1057,331.3 1064.3,327.7 1070.9,324.5 1074.1,331.3 1077.3,339.9 1080.2,343.5 1085.1,342.8 1091.2,342.3 1096.1,345.5 1101,348.4 1104.6,354.5 1108.3,360.6 1110.7,362.4 1115.6,359.4 1121.7,357 1126.6,353.3 1130.3,352.1 1135.2,352.8 1140.8,355.8 1143.2,364.3 1145.7,380.2 1148.1,392.4 1150.6,397.3 1154.7,397.3 1160.8,396.1 1168.2,394.4 1174.3,392.9 1177.5,387.5 1180.4,379 1184.1,373.4 1186.5,374.1 1189.7,382.6 1192.6,390 1195.5,393.6 1198.7,404.6 1201.6,415.3 1203.7,422.7 1210,423.7 1214.2,424.2 1216.4,429 1218.5,440.6 1220.6,452.2 1222.7,459.6 1225.8,463.8 1228,471.2 1231.1,480.7 1234.3,488 1236.4,491.2 1238.1,501.7 1239.5,512.3 1241,520.7 1242.7,531.3 1244.4,535.9 1246.9,536.1" fill="none" stroke="#00ff80" stroke-width="1" shape-rendering="crispEdges"/><polyline points="76.8,560.2 82.2,559.7 85.9,553.6 89.6,537.8 92.5,533.4 96.9,535.3 104.2,538.2 107.9,545.1 111.5,554.9 115.2,561 118.9,567.1 122.5,573.2 127.4,574.4 134,573.9 137.2,569.5 140.9,558.5 144.5,553.6 149.4,550 153.8,546.3 158,550 162.9,555.3 165.8,551.2 169,535.3 172.2,513.3 175.1,502.3 178.7,495 181.9,479.1 184.9,473.5 187.3,476.7 191,487.7 195.9,494.3 198.3,490.1 200.7,479.1 203.2,464.4 205.6,460 210.5,458.3 216.1,457.6 219.1,459.6 224,465.7 228.8,468.1 232.5,480.3 236.2,497.4 241.1,507.2 246,515.8 248.9,518.2 252.1,513.3 255.7,507.2 260.1,501.1 263.1,484 263.7,477.8 264.8,468.9 266.4,465 268.7,463.3 273.1,459.4 278.7,454.4 280.3,447.8 282,437.8 283.7,426.7 285.3,414.4 287,409.4 288.4,408.3 289.8,410 292,415 294.8,421.1 296.4,423.9 298.1,424.2 300.3,422.8 304.2,420.6 308.1,418.7 309.6,413.3 310.9,402.2 312.2,391.1 313.3,380 314.4,365.5 316.9,352.1 318.8,349.2 321.8,352.1 325.4,358.2 329.1,360.6 332.8,366.8 337.7,379 342.5,381.4 347.4,387.5 351.1,389.5 354,385.1 357.2,365.5 360.9,348.4 365.8,346 374.3,344 378,336.2 382.4,328.4 387.8,331.3 392.6,333.8 396.3,343.5 400,355.8 404.9,363.1 411,373.4 414.6,363.1 417.1,343.5 419.5,328.9 422,325.9 423.9,332.5 426.4,360.6 430.5,391.2 433,391.9 436.6,388.7 441.5,387 446.4,391.9 451.3,396.1 456.2,387.5 461.1,371.6 464,368 466.4,377.8 469.6,402.2 472.8,414.9 478.2,412 484.3,409.5 489.2,404.6 494.1,401 497.7,405.9 502.6,413.2 505.1,413.2 508.7,404.6 512.4,397.3 514.8,394.9 518.5,398.5 523.7,403.4 526.1,405.1 528.6,397.3 531,382.6 533.4,370.4 535.9,363.1 540.8,359.4 544.4,356.5 546.9,359.4 549.3,368 551.8,377.8 554.7,382.2 565.2,382.2 568.9,376.5 571.8,368 575,364.3 583.5,364.3 587.2,363.1 590.9,353.3 593.3,348.4 597,346 600.6,347.9 604.3,352.1 608,354.5 611.6,360.6 615.3,369.2 620.2,374.1 623.9,379 627.5,382.2 630.5,379 633.6,371.6 637.3,366.8 641,365 644.6,359.4 649.5,353.8 653.2,352.8 656.9,348.9 660.5,347.2 664.2,348.4 669.1,352.8 672.7,355.8 676.4,361.9 680.1,365.5 683.7,370.4 687.4,376.5 689.8,377.8 693.5,374.1 698.4,368 703.3,366.8 708.2,363.1 711.8,365.5 716.7,370.4 720.4,372.9 724.1,382.6 727.2,391.2 729.7,395.3 732.6,391.2 735.1,382.6 737.5,376.5 741.2,372.9 744.8,366.8 748.5,360.6 756.1,356.2 762.2,354.5 768.3,353.3 773.2,351.4 776.9,352.8 781.8,356.5 785.4,357.7 789.1,355.8 793.5,353.3 795.2,360.6 796.9,377.8 798.9,397.3 800.8,410.7 802.8,416.4 805,409.5 807.4,387.5 809.9,365.5 813,356.5 816,359.4 819.6,364.3 823.3,367.2 833.1,367.2 835.5,361.9 839.2,349.6 842.4,344.8 845.3,341.1 848.2,331.3 851.4,325.2 853.9,324.7 857.5,328.9 861.2,333.8 864.9,336.2 868.5,339.9 872.2,343 874.6,344 878.3,341.1 883.2,337.4 889.3,336.2 896.6,335 906.4,334.3 916.2,334.3 921.1,337.4 926,339.9 929.6,337.4 933.3,332.5 937.7,329.4 940.6,330.1 945.5,333.8 950.4,336.2 956.5,340.6 962.6,344.8 967.5,346.5 974.8,347.9 987.3,350.4 991,343.5 994.7,333.8 998.3,330.1 1003.2,330.8 1008.1,331.8 1013,327.7 1017.9,325.9 1022.8,326.4 1028.9,325.2 1036.2,321.5 1043.5,317.9 1050.9,315.4 1055.8,311.8 1060.6,310.1 1064.3,313 1068,319.1 1072.9,321.1 1077.8,322.8 1081.4,324 1085.1,331.3 1088.7,337.4 1092.4,338.7 1097.3,336.7 1101,336.7 1104.6,342.3 1108.3,349.6 1112,350.9 1115.6,348.4 1119.3,345.5 1124.2,341.1 1127.8,335.7 1130.3,334.3 1135.2,335.7 1141.3,338.7 1143.2,346 1145,360.6 1146.7,375.3 1149.1,383.9 1152.3,385.1 1156,382.6 1160.8,380.7 1165.7,379 1170.6,375.3 1175.5,372.9 1178.4,366.8 1181.6,358.2 1184.8,353.3 1187.2,355.8 1190.2,364.3 1192.6,371.6 1195.5,374.1 1198.7,382.6 1200.5,396.3 1203.7,403.7 1209,407.9 1214.2,410 1216.4,415.3 1218.5,425.8 1220.6,437.4 1222.7,443.8 1225.8,450.1 1228,457.5 1231.1,467 1234.3,474.3 1236,482.8 1237.4,495.4 1238.9,510.2 1240.2,524.9 1241.2,541.8 1242.7,554.5 1244.4,558.7 1246.9,559.1" fill="none" stroke="#0000ff" stroke-width="1" shape-rendering="crispEdges"/></svg><div class="a" style="left:77px;top:803px;width:1172px;height:3px;background:#f0f0f0"></div><div class="a" style="left:77px;top:803px;width:1172px;height:3px" id="ticks"><div class="a" style="left:26px;top:0;width:1px;height:2px;background:#000"></div><div class="a" style="left:66px;top:0;width:1px;height:2px;background:#000"></div><div class="a" style="left:98px;top:0;width:1px;height:2px;background:#000"></div><div class="a" style="left:126px;top:0;width:1px;height:2px;background:#000"></div><div class="a" style="left:150px;top:0;width:1px;height:2px;background:#000"></div><div class="a" style="left:171px;top:0;width:1px;height:2px;background:#000"></div><div class="a" style="left:190px;top:0;width:1px;height:2px;background:#000"></div><div class="a" style="left:313px;top:0;width:1px;height:2px;background:#000"></div><div class="a" style="left:386px;top:0;width:1px;height:2px;background:#000"></div><div class="a" style="left:437px;top:0;width:1px;height:2px;background:#000"></div><div class="a" style="left:477px;top:0;width:1px;height:2px;background:#000"></div><div class="a" style="left:510px;top:0;width:1px;height:2px;background:#000"></div><div class="a" style="left:537px;top:0;width:1px;height:2px;background:#000"></div><div class="a" style="left:561px;top:0;width:1px;height:2px;background:#000"></div><div class="a" style="left:582px;top:0;width:1px;height:2px;background:#000"></div><div class="a" style="left:601px;top:0;width:1px;height:2px;background:#000"></div><div class="a" style="left:725px;top:0;width:1px;height:2px;background:#000"></div><div class="a" style="left:797px;top:0;width:1px;height:2px;background:#000"></div><div class="a" style="left:848px;top:0;width:1px;height:2px;background:#000"></div><div class="a" style="left:888px;top:0;width:1px;height:2px;background:#000"></div><div class="a" style="left:921px;top:0;width:1px;height:2px;background:#000"></div><div class="a" style="left:948px;top:0;width:1px;height:2px;background:#000"></div><div class="a" style="left:972px;top:0;width:1px;height:2px;background:#000"></div><div class="a" style="left:993px;top:0;width:1px;height:2px;background:#000"></div><div class="a" style="left:1012px;top:0;width:1px;height:2px;background:#000"></div><div class="a" style="left:1136px;top:0;width:1px;height:2px;background:#000"></div></div><div class="t" style="left:53.0px;top:191.0px;font-size:13px;font-family:'Liberation Sans',sans-serif;color:#000;font-weight:normal;transform-origin:0 0;transform:scaleX(0.9680);">0.0</div><div class="t" style="left:1284.5px;top:191.0px;font-size:13px;font-family:'Liberation Sans',sans-serif;color:#000;font-weight:normal;transform-origin:0 0;transform:scaleX(0.9680);">0.0</div><div class="a" style="left:1279px;top:197px;width:3px;height:1px;background:#000"></div><div class="a" style="left:75px;top:197px;width:3px;height:1px;background:#000"></div><div class="t" style="left:42.1px;top:266.0px;font-size:13px;font-family:'Liberation Sans',sans-serif;color:#000;font-weight:normal;transform-origin:0 0;transform:scaleX(0.9581);">-10.0</div><div class="t" style="left:1284.5px;top:266.0px;font-size:13px;font-family:'Liberation Sans',sans-serif;color:#000;font-weight:normal;transform-origin:0 0;transform:scaleX(0.9581);">-10.0</div><div class="a" style="left:1279px;top:272px;width:3px;height:1px;background:#000"></div><div class="a" style="left:75px;top:272px;width:3px;height:1px;background:#000"></div><div class="t" style="left:42.1px;top:342.0px;font-size:13px;font-family:'Liberation Sans',sans-serif;color:#000;font-weight:normal;transform-origin:0 0;transform:scaleX(0.9581);">-20.0</div><div class="t" style="left:1284.5px;top:342.0px;font-size:13px;font-family:'Liberation Sans',sans-serif;color:#000;font-weight:normal;transform-origin:0 0;transform:scaleX(0.9581);">-20.0</div><div class="a" style="left:1279px;top:348px;width:3px;height:1px;background:#000"></div><div class="a" style="left:75px;top:348px;width:3px;height:1px;background:#000"></div><div class="t" style="left:42.1px;top:417.0px;font-size:13px;font-family:'Liberation Sans',sans-serif;color:#000;font-weight:normal;transform-origin:0 0;transform:scaleX(0.9581);">-30.0</div><div class="t" style="left:1284.5px;top:417.0px;font-size:13px;font-family:'Liberation Sans',sans-serif;color:#000;font-weight:normal;transform-origin:0 0;transform:scaleX(0.9581);">-30.0</div><div class="a" style="left:1279px;top:423px;width:3px;height:1px;background:#000"></div><div class="a" style="left:75px;top:423px;width:3px;height:1px;background:#000"></div><div class="t" style="left:42.1px;top:493.0px;font-size:13px;font-family:'Liberation Sans',sans-serif;color:#000;font-weight:normal;transform-origin:0 0;transform:scaleX(0.9581);">-40.0</div><div class="t" style="left:1284.5px;top:493.0px;font-size:13px;font-family:'Liberation Sans',sans-serif;color:#000;font-weight:normal;transform-origin:0 0;transform:scaleX(0.9581);">-40.0</div><div class="a" style="left:1279px;top:499px;width:3px;height:1px;background:#000"></div><div class="a" style="left:75px;top:499px;width:3px;height:1px;background:#000"></div><div class="t" style="left:42.1px;top:569.0px;font-size:13px;font-family:'Liberation Sans',sans-serif;color:#000;font-weight:normal;transform-origin:0 0;transform:scaleX(0.9581);">-50.0</div><div class="t" style="left:1284.5px;top:569.0px;font-size:13px;font-family:'Liberation Sans',sans-serif;color:#000;font-weight:normal;transform-origin:0 0;transform:scaleX(0.9581);">-50.0</div><div class="a" style="left:1279px;top:575px;width:3px;height:1px;background:#000"></div><div class="a" style="left:75px;top:575px;width:3px;height:1px;background:#000"></div><div class="t" style="left:42.1px;top:644.0px;font-size:13px;font-family:'Liberation Sans',sans-serif;color:#000;font-weight:normal;transform-origin:0 0;transform:scaleX(0.9581);">-60.0</div><div class="t" style="left:1284.5px;top:644.0px;font-size:13px;font-family:'Liberation Sans',sans-serif;color:#000;font-weight:normal;transform-origin:0 0;transform:scaleX(0.9581);">-60.0</div><div class="a" style="left:1279px;top:650px;width:3px;height:1px;background:#000"></div><div class="a" style="left:75px;top:650px;width:3px;height:1px;background:#000"></div><div class="t" style="left:42.1px;top:720.0px;font-size:13px;font-family:'Liberation Sans',sans-serif;color:#000;font-weight:normal;transform-origin:0 0;transform:scaleX(0.9581);">-70.0</div><div class="t" style="left:1284.5px;top:720.0px;font-size:13px;font-family:'Liberation Sans',sans-serif;color:#000;font-weight:normal;transform-origin:0 0;transform:scaleX(0.9581);">-70.0</div><div class="a" style="left:1279px;top:726px;width:3px;height:1px;background:#000"></div><div class="a" style="left:75px;top:726px;width:3px;height:1px;background:#000"></div><div class="t" style="left:42.1px;top:796.0px;font-size:13px;font-family:'Liberation Sans',sans-serif;color:#000;font-weight:normal;transform-origin:0 0;transform:scaleX(0.9581);">-80.0</div><div class="t" style="left:1284.5px;top:796.0px;font-size:13px;font-family:'Liberation Sans',sans-serif;color:#000;font-weight:normal;transform-origin:0 0;transform:scaleX(0.9581);">-80.0</div><div class="a" style="left:1279px;top:802px;width:3px;height:1px;background:#000"></div><div class="a" style="left:75px;top:802px;width:3px;height:1px;background:#000"></div><div class="t" style="left:96.5px;top:806.0px;font-size:13px;font-family:'Liberation Sans',sans-serif;color:#000;font-weight:normal;transform-origin:0 0;transform:scaleX(0.9650);">40</div><div class="t" style="left:136.5px;top:806.0px;font-size:13px;font-family:'Liberation Sans',sans-serif;color:#000;font-weight:normal;transform-origin:0 0;transform:scaleX(0.9650);">50</div><div class="t" style="left:168.5px;top:806.0px;font-size:13px;font-family:'Liberation Sans',sans-serif;color:#000;font-weight:normal;transform-origin:0 0;transform:scaleX(0.9650);">60</div><div class="t" style="left:220.5px;top:806.0px;font-size:13px;font-family:'Liberation Sans',sans-serif;color:#000;font-weight:normal;transform-origin:0 0;transform:scaleX(0.9650);">80</div><div class="t" style="left:257.0px;top:806.0px;font-size:13px;font-family:'Liberation Sans',sans-serif;color:#000;font-weight:normal;transform-origin:0 0;transform:scaleX(0.9650);">100</div><div class="t" style="left:380.0px;top:806.0px;font-size:13px;font-family:'Liberation Sans',sans-serif;color:#000;font-weight:normal;transform-origin:0 0;transform:scaleX(0.9650);">200</div><div class="t" style="left:453.0px;top:806.0px;font-size:13px;font-family:'Liberation Sans',sans-serif;color:#000;font-weight:normal;transform-origin:0 0;transform:scaleX(0.9650);">300</div><div class="t" style="left:504.0px;top:806.0px;font-size:13px;font-family:'Liberation Sans',sans-serif;color:#000;font-weight:normal;transform-origin:0 0;transform:scaleX(0.9650);">400</div><div class="t" style="left:544.0px;top:806.0px;font-size:13px;font-family:'Liberation Sans',sans-serif;color:#000;font-weight:normal;transform-origin:0 0;transform:scaleX(0.9650);">500</div><div class="t" style="left:577.0px;top:806.0px;font-size:13px;font-family:'Liberation Sans',sans-serif;color:#000;font-weight:normal;transform-origin:0 0;transform:scaleX(0.9650);">600</div><div class="t" style="left:628.0px;top:806.0px;font-size:13px;font-family:'Liberation Sans',sans-serif;color:#000;font-weight:normal;transform-origin:0 0;transform:scaleX(0.9650);">800</div><div class="t" style="left:666.6px;top:806.0px;font-size:13px;font-family:'Liberation Sans',sans-serif;color:#000;font-weight:normal;transform-origin:0 0;transform:scaleX(0.9650);">1.0k</div><div class="t" style="left:790.6px;top:806.0px;font-size:13px;font-family:'Liberation Sans',sans-serif;color:#000;font-weight:normal;transform-origin:0 0;transform:scaleX(0.9650);">2.0k</div><div class="t" style="left:862.6px;top:806.0px;font-size:13px;font-family:'Liberation Sans',sans-serif;color:#000;font-weight:normal;transform-origin:0 0;transform:scaleX(0.9650);">3.0k</div><div class="t" style="left:913.6px;top:806.0px;font-size:13px;font-family:'Liberation Sans',sans-serif;color:#000;font-weight:normal;transform-origin:0 0;transform:scaleX(0.9650);">4.0k</div><div class="t" style="left:953.6px;top:806.0px;font-size:13px;font-family:'Liberation Sans',sans-serif;color:#000;font-weight:normal;transform-origin:0 0;transform:scaleX(0.9650);">5.0k</div><div class="t" style="left:986.6px;top:806.0px;font-size:13px;font-family:'Liberation Sans',sans-serif;color:#000;font-weight:normal;transform-origin:0 0;transform:scaleX(0.9650);">6.0k</div><div class="t" style="left:1037.6px;top:806.0px;font-size:13px;font-family:'Liberation Sans',sans-serif;color:#000;font-weight:normal;transform-origin:0 0;transform:scaleX(0.9650);">8.0k</div><div class="t" style="left:1074.2px;top:806.0px;font-size:13px;font-family:'Liberation Sans',sans-serif;color:#000;font-weight:normal;transform-origin:0 0;transform:scaleX(0.9650);">10.0k</div><div class="t" style="left:1198.2px;top:806.0px;font-size:13px;font-family:'Liberation Sans',sans-serif;color:#000;font-weight:normal;transform-origin:0 0;transform:scaleX(0.9650);">20.0k</div><div class="t" style="left:679.0px;top:818.0px;font-size:13px;font-family:'Liberation Sans',sans-serif;color:#000;font-weight:normal;transform-origin:0 0;transform:scaleX(0.9210);">Frequency (Hz)</div><div class="t" style="left:23.5px;top:530.5px;font-size:13px;color:#000;transform-origin:0 0;transform:rotate(-90deg) scaleX(1.0332)">dBV rms</div><div class="a" style="left:1257px;top:195px;width:23px;height:608px;background:#000;border-left:2px solid #a0a0a0;border-top:2px solid #a0a0a0"></div><div class="a" style="left:1261px;top:201px;width:16px;height:601px;background:#ffff00"></div><div class="t" style="left:1259px;top:806px;font-size:13px">Pwr</div><div class="a" style="left:1265px;top:820px;width:10px;height:10px;background:#f0f0f0;border:1px solid #fff;border-right-color:#696969;border-bottom-color:#696969;box-shadow:inset -1px -1px 0 #a0a0a0"></div><div class="a" style="left:1268px;top:825px;width:3px;height:1px;background:#000"></div><div class="a" style="left:1411px;top:820px;width:10px;height:10px;background:#f0f0f0;border:1px solid #fff;border-right-color:#696969;border-bottom-color:#696969;box-shadow:inset -1px -1px 0 #a0a0a0"></div><div class="a" style="left:1414px;top:825px;width:3px;height:1px;background:#000"></div><div class="t" style="left:1352.0px;top:183.0px;font-size:13px;font-family:'Liberation Sans',sans-serif;color:#000;font-weight:normal;transform-origin:0 0;transform:scaleX(0.9162);">Overlays</div><div class="a" style="left:1352px;top:195px;width:47px;height:1px;background:#000"></div><div class="t" style="left:1327.5px;top:214.5px;font-size:13px;color:#000;transform-origin:0 0;transform:rotate(-90deg) scaleX(0.8967)">Set</div><div class="t" style="left:1343.5px;top:214.5px;font-size:13px;color:#000;transform-origin:0 0;transform:rotate(-90deg) scaleX(0.8937)">On</div><div class="a" style="left:1326px;top:219px;width:13px;height:13px;background:#f0f0f0;border:1px solid #fff;border-right-color:#696969;border-bottom-color:#696969;box-shadow:inset -1px -1px 0 #a0a0a0"></div><div class="t" style="left:1326px;width:12px;text-align:center;top:219px;font-size:13px">1</div><div class="a" style="left:1343px;top:219px;width:13px;height:13px;background:#fff;border:1px solid #a0a0a0;border-right-color:#fff;border-bottom-color:#fff;box-shadow:inset 1px 1px 0 #696969,inset -1px -1px 0 #e3e3e3"></div><svg class="a" style="left:1343px;top:219px" width="13" height="13" viewBox="0 0 13 13" ><path d="M3 6l2.500 2.500l4.500-4.500" fill="none" stroke="#000" stroke-width="2"/></svg><div class="t" style="left:1359.0px;top:219.0px;font-size:13px;font-family:'Liberation Sans',sans-serif;color:#ff0000;font-weight:normal;transform-origin:0 0;transform:scaleX(0.8896);">Overlay 1</div><div class="a" style="left:1326px;top:235px;width:13px;height:13px;background:#f0f0f0;border:1px solid #fff;border-right-color:#696969;border-bottom-color:#696969;box-shadow:inset -1px -1px 0 #a0a0a0"></div><div class="t" style="left:1326px;width:12px;text-align:center;top:235px;font-size:13px">2</div><div class="a" style="left:1343px;top:235px;width:13px;height:13px;background:#fff;border:1px solid #a0a0a0;border-right-color:#fff;border-bottom-color:#fff;box-shadow:inset 1px 1px 0 #696969,inset -1px -1px 0 #e3e3e3"></div><svg class="a" style="left:1343px;top:235px" width="13" height="13" viewBox="0 0 13 13" ><path d="M3 6l2.500 2.500l4.500-4.500" fill="none" stroke="#000" stroke-width="2"/></svg><div class="t" style="left:1359.0px;top:235.0px;font-size:13px;font-family:'Liberation Sans',sans-serif;color:#00ff80;font-weight:normal;transform-origin:0 0;transform:scaleX(0.8896);">Overlay 2</div><div class="a" style="left:1326px;top:251px;width:13px;height:13px;background:#f0f0f0;border:1px solid #fff;border-right-color:#696969;border-bottom-color:#696969;box-shadow:inset -1px -1px 0 #a0a0a0"></div><div class="t" style="left:1326px;width:12px;text-align:center;top:251px;font-size:13px">3</div><div class="a" style="left:1328px;top:253px;width:9px;height:9px;border:1px dotted #000"></div><div class="a" style="left:1343px;top:251px;width:13px;height:13px;background:#fff;border:1px solid #a0a0a0;border-right-color:#fff;border-bottom-color:#fff;box-shadow:inset 1px 1px 0 #696969,inset -1px -1px 0 #e3e3e3"></div><svg class="a" style="left:1343px;top:251px" width="13" height="13" viewBox="0 0 13 13" ><path d="M3 6l2.500 2.500l4.500-4.500" fill="none" stroke="#000" stroke-width="2"/></svg><div class="t" style="left:1359.0px;top:251.0px;font-size:13px;font-family:'Liberation Sans',sans-serif;color:#0000ff;font-weight:normal;transform-origin:0 0;transform:scaleX(0.8896);">Overlay 3</div><div class="a" style="left:1326px;top:267px;width:13px;height:13px;background:#f0f0f0;border:1px solid #fff;border-right-color:#696969;border-bottom-color:#696969;box-shadow:inset -1px -1px 0 #a0a0a0"></div><div class="t" style="left:1326px;width:12px;text-align:center;top:267px;font-size:13px">4</div><div class="a" style="left:1343px;top:267px;width:13px;height:13px;background:#fff;border:1px solid #a0a0a0;border-right-color:#fff;border-bottom-color:#fff;box-shadow:inset 1px 1px 0 #696969,inset -1px -1px 0 #e3e3e3"></div><div class="t" style="left:1359.0px;top:267.0px;font-size:13px;font-family:'Liberation Sans',sans-serif;color:#ff00ff;font-weight:normal;transform-origin:0 0;transform:scaleX(0.8896);">Overlay 4</div><div class="a" style="left:1326px;top:283px;width:13px;height:13px;background:#f0f0f0;border:1px solid #fff;border-right-color:#696969;border-bottom-color:#696969;box-shadow:inset -1px -1px 0 #a0a0a0"></div><div class="t" style="left:1326px;width:12px;text-align:center;top:283px;font-size:13px">5</div><div class="a" style="left:1343px;top:283px;width:13px;height:13px;background:#fff;border:1px solid #a0a0a0;border-right-color:#fff;border-bottom-color:#fff;box-shadow:inset 1px 1px 0 #696969,inset -1px -1px 0 #e3e3e3"></div><div class="t" style="left:1359.0px;top:283.0px;font-size:13px;font-family:'Liberation Sans',sans-serif;color:#804000;font-weight:normal;transform-origin:0 0;transform:scaleX(0.8896);">Overlay 5</div><div class="a" style="left:1326px;top:299px;width:13px;height:13px;background:#f0f0f0;border:1px solid #fff;border-right-color:#696969;border-bottom-color:#696969;box-shadow:inset -1px -1px 0 #a0a0a0"></div><div class="t" style="left:1326px;width:12px;text-align:center;top:299px;font-size:13px">6</div><div class="a" style="left:1343px;top:299px;width:13px;height:13px;background:#fff;border:1px solid #a0a0a0;border-right-color:#fff;border-bottom-color:#fff;box-shadow:inset 1px 1px 0 #696969,inset -1px -1px 0 #e3e3e3"></div><div class="t" style="left:1359.0px;top:299.0px;font-size:13px;font-family:'Liberation Sans',sans-serif;color:#ff8040;font-weight:normal;transform-origin:0 0;transform:scaleX(0.8896);">Overlay 6</div><div class="a" style="left:1326px;top:315px;width:13px;height:13px;background:#f0f0f0;border:1px solid #fff;border-right-color:#696969;border-bottom-color:#696969;box-shadow:inset -1px -1px 0 #a0a0a0"></div><div class="t" style="left:1326px;width:12px;text-align:center;top:315px;font-size:13px">C</div><div class="a" style="left:1343px;top:315px;width:13px;height:13px;background:#fff;border:1px solid #a0a0a0;border-right-color:#fff;border-bottom-color:#fff;box-shadow:inset 1px 1px 0 #696969,inset -1px -1px 0 #e3e3e3"></div><div class="t" style="left:1359.0px;top:315.0px;font-size:13px;font-family:'Liberation Sans',sans-serif;color:#000;font-weight:normal;transform-origin:0 0;transform:scaleX(0.9816);">Composite</div><div class="pb" style="left:1323px;top:331px;width:64px;height:19px"></div><div class="t" style="left:1329.5px;top:334.0px;font-size:13px;font-family:'Liberation Sans',sans-serif;color:#000;font-weight:normal;transform-origin:0 0;transform:scaleX(0.9256);">Options...</div><div class="a" style="left:1130px;top:43px;width:229px;height:134px;border:1px solid #5a6670;border-radius:7px;background:linear-gradient(#e8f8fd,#e0f3fb 20px,#d9eefa 60%,#d6ecf9);box-shadow:0 0 0 1px rgba(255,255,255,.0),inset 0 0 0 1px #f4fbff,2px 3px 6px rgba(0,0,0,.35)"></div><div class="a" style="left:1136px;top:72px;width:217px;height:98px;background:#f0f0f0;border:1px solid #8a8f98;box-shadow:0 0 0 1px rgba(255,255,255,.7)"></div><svg class="a" style="left:1137px;top:50px" width="16" height="16" viewBox="0 0 16 16" shape-rendering="auto"><rect x=".5" y=".5" width="15" height="15" fill="#fff" stroke="#000"/><path d="M2 8l3-2.500 1 4.500 3-5 1 5 3-4.500 1 1.500" fill="none" stroke="#000" stroke-width=".8"/></svg><div class="t" style="left:1157.5px;top:52.4px;font-size:12.5px;font-family:'Liberation Sans',sans-serif;color:#000;font-weight:normal;transform-origin:0 0;transform:scaleX(0.9575);text-shadow:0 0 6px #fff;">Signal Generator</div><div class="a" style="left:1306px;top:44px;width:46px;height:19px;border:1px solid #8b97a5;border-top:0;border-radius:0 0 4px 4px;background:linear-gradient(#ecf9fd,#e2f4fb 50%,#d9eff9 52%,#e2f4fb);box-shadow:inset 0 0 0 1px rgba(255,255,255,.6)"></div><svg class="a" style="left:1323px;top:47px" width="13" height="12" viewBox="0 0 13 12" shape-rendering="auto"><path d="M1.500 1.500h3l2 2.800 2-2.800h3l-3.500 4.500 3.500 4.500h-3l-2-2.800-2 2.800h-3l3.500-4.500z" fill="#fff" stroke="#4a4e58" stroke-width="1"/></svg><div class="pb" style="left:1141px;top:77px;width:106px;height:25px"></div><div class="t" style="left:1141px;width:106px;text-align:center;top:83px;font-size:13px;color:#000">Run</div><div class="pb" style="left:1253px;top:77px;width:90px;height:25px"></div><div class="t" style="left:1253px;width:90px;text-align:center;top:83px;font-size:13px;color:#000">Level</div><div class="t" style="left:1143px;top:114px;font-size:13px">L</div><div class="sel" style="left:1157px;top:109px;width:90px;height:23px"></div><div class="t" style="left:1160.5px;top:114.0px;font-size:13px;font-family:'Liberation Sans',sans-serif;color:#000;font-weight:normal;transform-origin:0 0;transform:scaleX(0.9816);">Pink Noise</div><div class="arr" style="left:1228px;top:111px;width:17px;height:19px"></div><div class="pb" style="left:1253px;top:109px;width:90px;height:23px"></div><div class="t" style="left:1253px;width:90px;text-align:center;top:113px;font-size:13px;color:#a0a0a0">Details...</div><div class="t" style="left:1143px;top:142px;font-size:13px">R</div><div class="sel" style="left:1157px;top:137px;width:90px;height:23px"></div><div class="t" style="left:1160.5px;top:142.0px;font-size:13px;font-family:'Liberation Sans',sans-serif;color:#000;font-weight:normal;transform-origin:0 0;transform:scaleX(0.9229);">N/A</div><div class="arr" style="left:1228px;top:139px;width:17px;height:19px"></div><div class="pb" style="left:1253px;top:137px;width:90px;height:23px"></div><div class="t" style="left:1253px;width:90px;text-align:center;top:141px;font-size:13px;color:#a0a0a0">Details...</div><div class="a" style="left:8px;top:841px;width:1424px;height:20px;background:#f0f0f0"></div><div class="a" style="left:12px;top:844px;width:118px;height:17px;border-top:1px solid #a0a0a0;border-left:1px solid #a0a0a0;border-right:1px solid #fff"></div><div class="t" style="left:15.5px;top:846.0px;font-size:13px;font-family:'Liberation Sans',sans-serif;color:#000;font-weight:normal;transform-origin:0 0;transform:scaleX(0.9600);">Stopped</div><div class="a" style="left:132px;top:844px;width:101px;height:17px;border-top:1px solid #a0a0a0;border-left:1px solid #a0a0a0;border-right:1px solid #fff"></div><div class="t" style="left:136.0px;top:846.0px;font-size:13px;font-family:'Liberation Sans',sans-serif;color:#000;font-weight:normal;transform-origin:0 0;transform:scaleX(0.9653);">Real Time</div><div class="a" style="left:235px;top:844px;width:71px;height:17px;border-top:1px solid #a0a0a0;border-left:1px solid #a0a0a0;border-right:1px solid #fff"></div><div class="t" style="left:239.5px;top:846.0px;font-size:13px;font-family:'Liberation Sans',sans-serif;color:#000;font-weight:normal;transform-origin:0 0;transform:scaleX(0.9433);">48000 Hz</div><div class="a" style="left:308px;top:844px;width:51px;height:17px;border-top:1px solid #a0a0a0;border-left:1px solid #a0a0a0;border-right:1px solid #fff"></div><div class="t" style="left:313.0px;top:846.0px;font-size:13px;font-family:'Liberation Sans',sans-serif;color:#000;font-weight:normal;transform-origin:0 0;transform:scaleX(0.9173);">16 Bit</div><div class="a" style="left:361px;top:844px;width:61px;height:17px;border-top:1px solid #a0a0a0;border-left:1px solid #a0a0a0;border-right:1px solid #fff"></div><div class="t" style="left:365.0px;top:846.0px;font-size:13px;font-family:'Liberation Sans',sans-serif;color:#000;font-weight:normal;transform-origin:0 0;transform:scaleX(0.9068);">Mono</div><div class="a" style="left:424px;top:844px;width:101px;height:17px;border-top:1px solid #a0a0a0;border-left:1px solid #a0a0a0;border-right:1px solid #fff"></div><div class="t" style="left:428.0px;top:846.0px;font-size:13px;font-family:'Liberation Sans',sans-serif;color:#000;font-weight:normal;transform-origin:0 0;transform:scaleX(0.9311);">FFT 32768 pts</div><div class="a" style="left:527px;top:844px;width:73px;height:17px;border-top:1px solid #a0a0a0;border-left:1px solid #a0a0a0;border-right:1px solid #fff"></div><div class="t" style="left:531.0px;top:846.0px;font-size:13px;font-family:'Liberation Sans',sans-serif;color:#000;font-weight:normal;transform-origin:0 0;transform:scaleX(0.9703);">Hanning</div><div class="a" style="left:602px;top:844px;width:827px;height:17px;border-top:1px solid #a0a0a0;border-left:1px solid #a0a0a0;border-right:1px solid #fff"></div><div class="a" style="left:0;top:860px;width:1440px;height:40px;background:linear-gradient(#2c3139 0,#2c3139 1px,#93a8c0 1px,#6a7d95 3px,#45525f 6px,#2a3039 10px,#1a1c22 15px,#131418 22px,#15161a 100%)"></div><div class="a" style="left:0;top:860px;width:1440px;height:40px;background:linear-gradient(100deg,rgba(255,255,255,0) 0,rgba(255,255,255,0) 30%,rgba(120,125,135,.18) 45%,rgba(255,255,255,0) 60%,rgba(110,115,125,.12) 80%,rgba(255,255,255,0) 100%)"></div><div class="a" style="left:8px;top:862px;width:37px;height:37px;border-radius:50%;background:radial-gradient(circle at 50% 100%,#58dcf6 0,#2e9ad6 28%,#1e62a4 52%,#194878 75%,#12345c 100%);box-shadow:0 0 0 1px #0c2a50,0 0 5px 1px rgba(110,180,235,.55)"></div><div class="a" style="left:11px;top:863px;width:31px;height:18px;border-radius:50% 50% 45% 45%;background:linear-gradient(rgba(255,255,255,.5),rgba(255,255,255,.08))"></div><svg class="a" style="left:14.500px;top:864.400px" width="26" height="27.800" viewBox="0 0 24 24" preserveAspectRatio="none"><path d="M3 6c3-2 6-2 9 0l-2 7c-3-2-6-2-9 0z" fill="#e8602c"/><path d="M14 7c3 2 6 2 9 0l-2 7c-3 2-6 2-9 0z" fill="#7cb82f"/><path d="M1 15c3-2 6-2 9 0l-2 7c-3-2-6-2-9 0z" fill="#3a8fde"/><path d="M11.500 16c3 2 6 2 9 0l-2 7c-3 2-6 2-9 0z" fill="#f8c420"/></svg><svg class="a" style="left:72px;top:864px" width="36" height="34" viewBox="0 0 36 34" shape-rendering="auto"><path d="M2 6h12l2 3h16v21h-30z" fill="#e8cf7a" stroke="#c9a94a"/><path d="M16 9l2-3h12l2 3z" fill="#f3e2a0"/><rect x="5" y="3" width="9" height="3" fill="#f6f6f6"/><rect x="5" y="3" width="3" height="2" fill="#18a818"/><rect x="13" y="5" width="9" height="3" fill="#f6f6f6"/><rect x="13" y="5" width="3" height="2" fill="#d03020"/><rect x="21" y="7" width="9" height="3" fill="#f6f6f6"/><rect x="21" y="7" width="3" height="2" fill="#2080e0"/><rect x="2" y="12" width="30" height="18" rx="1" fill="#f3df96" stroke="#d2b65a"/><path d="M7 30v-8c0-2 1-3 3-3h14c2 0 3 1 3 3v8h-5v-6h-10v6z" fill="#69b6e4" stroke="#2f7fb8"/><path d="M7 20l4-1v3l-4 1z" fill="#fff" opacity=".8"/></svg><svg class="a" style="left:135px;top:867px" width="31" height="26" viewBox="0 0 31 26" shape-rendering="auto"><rect x=".5" y=".5" width="30" height="25" fill="#000" stroke="#9a9a9a"/><rect x="1" y="1" width="29" height="3" fill="#c8c8c8"/><text x="3" y="15" font-family="Liberation Mono, monospace" font-size="8" font-weight="bold" fill="#fff">C:\</text><rect x="19" y="14" width="8" height="1.500" fill="#fff"/></svg><svg class="a" style="left:200px;top:865px" width="26" height="32" viewBox="0 0 26 32" shape-rendering="auto"><rect x="1.500" y=".5" width="22" height="30" rx="2" fill="#dcecf8" stroke="#6aa0d0" stroke-width="1.500"/><rect x="4" y="3" width="17" height="3" fill="#f0a030"/><rect x="4" y="6" width="17" height="8" fill="#e8f2fb" stroke="#8ab4dc"/><text x="14" y="13" font-family="Liberation Mono, monospace" font-size="8" fill="#3a70b0">0</text><g fill="#8fc0e8"><rect x="4" y="16" width="3" height="3"/><rect x="8.500" y="16" width="3" height="3"/><rect x="13" y="16" width="3" height="3"/><rect x="4" y="20.500" width="3" height="3"/><rect x="8.500" y="20.500" width="3" height="3"/><rect x="13" y="20.500" width="3" height="3"/><rect x="4" y="25" width="3" height="3"/><rect x="8.500" y="25" width="3" height="3"/><rect x="13" y="25" width="3" height="3"/><rect x="17.500" y="16" width="3" height="3"/></g><rect x="17.500" y="20.500" width="3" height="7.500" fill="#f0a030"/></svg><div class="a" style="left:246px;top:861px;width:59px;height:40px;border:1px solid #8e939c;border-radius:3px 3px 0 0;background:linear-gradient(165deg,#7c8088 0,#666a72 30%,#44474e 55%,#2c2e34 75%,#33363c 100%);box-shadow:inset 0 0 0 1px rgba(255,255,255,.12)"></div><svg class="a" style="left:259px;top:864px" width="32" height="32" viewBox="0 0 32 32" shape-rendering="auto"><defs><linearGradient id="og" x1="0" y1="0" x2="1" y2="1"><stop offset="0" stop-color="#ff2a3a"/><stop offset=".55" stop-color="#ee1626"/><stop offset="1" stop-color="#a80818"/></linearGradient></defs><ellipse cx="16" cy="16" rx="15" ry="15.300" fill="url(#og)"/><ellipse cx="16.800" cy="16" rx="7.300" ry="11.300" fill="#3c3f47"/></svg><div class="a" style="left:308px;top:861px;width:59px;height:40px;border:1px solid #e2e5e9;border-radius:3px 3px 0 0;background:linear-gradient(170deg,#e2e4e8 0,#c2c5ca 28%,#979ba2 52%,#777b82 75%,#8a8e95 100%);box-shadow:inset 0 0 0 1px rgba(255,255,255,.35)"></div><svg class="a" style="left:321px;top:864px" width="32" height="33" viewBox="0 0 32 33" shape-rendering="auto"><rect x=".75" y=".75" width="30.500" height="31.500" fill="#fff" stroke="#222" stroke-width="1.500"/><path d="M6.500 1v31M12.500 1v31M18.500 1v31M24.500 1v31M1 6.500h30M1 12.500h30M1 18.500h30M1 24.500h30" stroke="#8a8a8a" stroke-width="1.200" shape-rendering="crispEdges"/><path d="M2.800 8.800h6.700l1.500-1.300 2.700 4.200 3.300 1.600 4-3.800 2.700 1.300 2.500 5 1.600 1.700.5 4.200" fill="none" stroke="#e01010" stroke-width="1.400"/><path d="M2.800 11.700l4.200.3 2.500 3.800h4.200l3.300 2.500 2.500-2.500 2.200-5.300 2 5.300 1.600 4.200 2 2.500 1 4.200" fill="none" stroke="#1010e0" stroke-width="1.700"/></svg><div class="t" style="left:1199.5px;top:871.8px;font-size:12px;font-family:'Liberation Sans',sans-serif;color:#fff;font-weight:normal;transform-origin:0 0;transform:scaleX(0.8697);">EN</div><svg class="a" style="left:1232px;top:872.5px" width="12.5" height="16" viewBox="0 0 12.5 16" shape-rendering="auto"><ellipse cx="6.250" cy="8" rx="6.250" ry="8" fill="#12408c"/><path d="M3.300 5l5.500 5.500-2.700 2.700v-10.400l2.700 2.700-5.500 5.500" fill="none" stroke="#fff" stroke-width="1.200"/></svg><svg class="a" style="left:1253px;top:872px" width="20" height="20" viewBox="0 0 20 20" shape-rendering="auto"><rect x="2.500" y="1" width="6" height="5" fill="#c4c4c4"/><rect x="4" y="2.500" width="1.200" height="1.500" fill="#888"/><rect x="6" y="2.500" width="1.200" height="1.500" fill="#888"/><path d="M1 6h9v7l-2.500 2.500h-4l-2.500-2.500z" fill="#8c8c8c"/><rect x="4.500" y="15" width="2" height="3" fill="#777"/><circle cx="12.300" cy="12" r="4.600" fill="#2aa42a"/><path d="M9.800 12l2 2 3-4.200" stroke="#fff" stroke-width="1.500" fill="none"/></svg><svg class="a" style="left:1276px;top:872px" width="20" height="20" viewBox="0 0 20 20" shape-rendering="auto"><rect x="3" y="3" width="9" height="13" rx="1" fill="none" stroke="#fff" stroke-width="1.600"/><rect x="5" y="1.500" width="5" height="2" fill="#fff"/><path d="M9.500 4v4M13.500 4v4" fill="none" stroke="#fff" stroke-width="1.600"/><path d="M7.500 8h8v3c0 1.500-2 2.500-4 2.500s-4-1-4-2.500z" fill="#fff"/><path d="M11.500 13v4.500" stroke="#fff" stroke-width="1.700"/></svg><svg class="a" style="left:1302px;top:875px" width="18" height="14" viewBox="0 0 18 14" ><rect x="1" y="9" width="2" height="2" fill="#fff"/><rect x="4" y="7" width="2" height="4" fill="#fff"/><rect x="7" y="5" width="2" height="6" fill="#fff"/><rect x="10" y="3" width="2" height="8" fill="#fff"/><rect x="13" y="0" width="2" height="11" fill="#8a8a8a"/></svg><svg class="a" style="left:1326px;top:873px" width="17" height="16" viewBox="0 0 17 16" shape-rendering="auto"><path d="M1 5h3.500l4.500-4.500v14l-4.500-4.500h-3.500z" fill="#fff"/><path d="M11 5c1.300 1.300 1.300 3.700 0 5M13 2.800c2.700 2.700 2.700 6.700 0 9.400" fill="none" stroke="#fff" stroke-width="1.100"/></svg><div class="t" style="left:1373.5px;top:866.8px;font-size:12px;font-family:'Liberation Sans',sans-serif;color:#fff;font-weight:normal;transform-origin:0 0;transform:scaleX(0.8991);">13:19</div><div class="t" style="left:1359.5px;top:883.8px;font-size:12px;font-family:'Liberation Sans',sans-serif;color:#fff;font-weight:normal;transform-origin:0 0;transform:scaleX(0.9074);">12.03.2024</div><div class="a" style="left:1426px;top:861px;width:15px;height:39px;border:1px solid #9ba1a9;border-radius:2px;background:linear-gradient(100deg,rgba(215,220,228,.45) 0,rgba(150,156,166,.3) 50%,rgba(70,75,84,.35) 100%)"></div></body></html>
